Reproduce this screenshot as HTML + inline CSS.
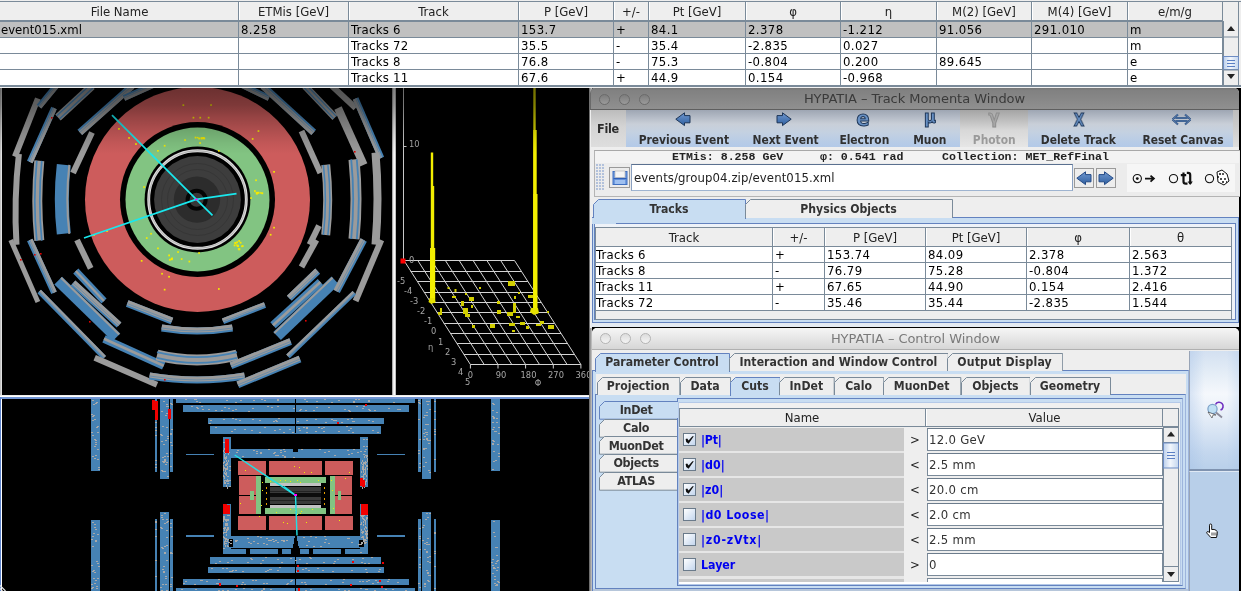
<!DOCTYPE html>
<html><head><meta charset="utf-8"><title>HYPATIA</title>
<style>
*{box-sizing:border-box;margin:0;padding:0}
html,body{width:1241px;height:591px;overflow:hidden;background:#000}
body{position:relative;font-family:"DejaVu Sans","Liberation Sans",sans-serif;font-size:12px;color:#000}
.abs{position:absolute}
.t{position:absolute;white-space:pre;will-change:transform;line-height:16px;height:16px;font-size:12px;letter-spacing:-0.3px}
.b{font-family:"DejaVu Sans Condensed","DejaVu Sans","Liberation Sans",sans-serif;font-weight:bold}
.c{text-align:center}
.grid{position:absolute;background:#7a8a99}
.hdr{position:absolute;background:#eee;border-right:1px solid #7a8a99;border-left:1px solid #fff;border-top:1px solid #fff}
.f13{font-family:"DejaVu Sans Condensed","DejaVu Sans","Liberation Sans",sans-serif;font-size:13px;letter-spacing:0}
.mono{font-family:"Liberation Mono",monospace;font-weight:bold}
</style></head><body>

<div class="abs" style="left:0px;top:0px;width:1241px;height:88px;background:#eee"></div>
<div class="abs" style="left:0px;top:21px;width:1222px;height:64px;background:#fff"></div>
<div class="abs" style="left:0px;top:21px;width:1222px;height:16px;background:#c0c0c0"></div>
<div class="abs" style="left:0px;top:1px;width:1241px;height:1px;background:#7a8a99"></div>
<div class="abs" style="left:0px;top:20px;width:1223px;height:2px;background:#7a8a99"></div>
<div class="t f13 c" style="left:1px;top:4px;width:237px;color:#222">File Name</div>
<div class="t f13 c" style="left:239px;top:4px;width:109px;color:#222">ETMis [GeV]</div>
<div class="t f13 c" style="left:349px;top:4px;width:169px;color:#222">Track</div>
<div class="t f13 c" style="left:519px;top:4px;width:94px;color:#222">P [GeV]</div>
<div class="t f13 c" style="left:614px;top:4px;width:34px;color:#222">+/-</div>
<div class="t f13 c" style="left:649px;top:4px;width:96px;color:#222">Pt [GeV]</div>
<div class="t f13 c" style="left:746px;top:4px;width:94px;color:#222">φ</div>
<div class="t f13 c" style="left:841px;top:4px;width:95px;color:#222">η</div>
<div class="t f13 c" style="left:937px;top:4px;width:94px;color:#222">M(2) [GeV]</div>
<div class="t f13 c" style="left:1032px;top:4px;width:95px;color:#222">M(4) [GeV]</div>
<div class="t f13 c" style="left:1128px;top:4px;width:94px;color:#222">e/m/g</div>
<div class="abs" style="left:238px;top:2px;width:1px;height:83px;background:#7a8a99"></div>
<div class="abs" style="left:239px;top:2px;width:1px;height:18px;background:#fff"></div>
<div class="abs" style="left:348px;top:2px;width:1px;height:83px;background:#7a8a99"></div>
<div class="abs" style="left:349px;top:2px;width:1px;height:18px;background:#fff"></div>
<div class="abs" style="left:518px;top:2px;width:1px;height:83px;background:#7a8a99"></div>
<div class="abs" style="left:519px;top:2px;width:1px;height:18px;background:#fff"></div>
<div class="abs" style="left:613px;top:2px;width:1px;height:83px;background:#7a8a99"></div>
<div class="abs" style="left:614px;top:2px;width:1px;height:18px;background:#fff"></div>
<div class="abs" style="left:648px;top:2px;width:1px;height:83px;background:#7a8a99"></div>
<div class="abs" style="left:649px;top:2px;width:1px;height:18px;background:#fff"></div>
<div class="abs" style="left:745px;top:2px;width:1px;height:83px;background:#7a8a99"></div>
<div class="abs" style="left:746px;top:2px;width:1px;height:18px;background:#fff"></div>
<div class="abs" style="left:840px;top:2px;width:1px;height:83px;background:#7a8a99"></div>
<div class="abs" style="left:841px;top:2px;width:1px;height:18px;background:#fff"></div>
<div class="abs" style="left:936px;top:2px;width:1px;height:83px;background:#7a8a99"></div>
<div class="abs" style="left:937px;top:2px;width:1px;height:18px;background:#fff"></div>
<div class="abs" style="left:1031px;top:2px;width:1px;height:83px;background:#7a8a99"></div>
<div class="abs" style="left:1032px;top:2px;width:1px;height:18px;background:#fff"></div>
<div class="abs" style="left:1127px;top:2px;width:1px;height:83px;background:#7a8a99"></div>
<div class="abs" style="left:1128px;top:2px;width:1px;height:18px;background:#fff"></div>
<div class="abs" style="left:1222px;top:2px;width:1px;height:83px;background:#7a8a99"></div>
<div class="abs" style="left:1223px;top:2px;width:1px;height:18px;background:#fff"></div>
<div class="abs" style="left:0px;top:37px;width:1223px;height:1px;background:#7a8a99"></div>
<div class="abs" style="left:0px;top:53px;width:1223px;height:1px;background:#7a8a99"></div>
<div class="abs" style="left:0px;top:69px;width:1223px;height:1px;background:#7a8a99"></div>
<div class="abs" style="left:0px;top:85px;width:1223px;height:1px;background:#7a8a99"></div>
<div class="t f13" style="left:1px;top:21.5px;">event015.xml</div>
<div class="t f13" style="left:240.5px;top:21.5px;letter-spacing:0.4px">8.258</div>
<div class="t f13" style="left:350.5px;top:21.5px;letter-spacing:0.25px">Tracks 6</div>
<div class="t f13" style="left:520.5px;top:21.5px;letter-spacing:0.4px">153.7</div>
<div class="t f13" style="left:615.5px;top:21.5px;">+</div>
<div class="t f13" style="left:650.5px;top:21.5px;letter-spacing:0.4px">84.1</div>
<div class="t f13" style="left:747.5px;top:21.5px;letter-spacing:0.4px">2.378</div>
<div class="t f13" style="left:842.5px;top:21.5px;letter-spacing:0.4px">-1.212</div>
<div class="t f13" style="left:938.5px;top:21.5px;letter-spacing:0.4px">91.056</div>
<div class="t f13" style="left:1033.5px;top:21.5px;letter-spacing:0.4px">291.010</div>
<div class="t f13" style="left:1129.5px;top:21.5px;">m</div>
<div class="t f13" style="left:350.5px;top:37.5px;letter-spacing:0.25px">Tracks 72</div>
<div class="t f13" style="left:520.5px;top:37.5px;letter-spacing:0.4px">35.5</div>
<div class="t f13" style="left:615.5px;top:37.5px;">-</div>
<div class="t f13" style="left:650.5px;top:37.5px;letter-spacing:0.4px">35.4</div>
<div class="t f13" style="left:747.5px;top:37.5px;letter-spacing:0.4px">-2.835</div>
<div class="t f13" style="left:842.5px;top:37.5px;letter-spacing:0.4px">0.027</div>
<div class="t f13" style="left:1129.5px;top:37.5px;">m</div>
<div class="t f13" style="left:350.5px;top:53.5px;letter-spacing:0.25px">Tracks 8</div>
<div class="t f13" style="left:520.5px;top:53.5px;letter-spacing:0.4px">76.8</div>
<div class="t f13" style="left:615.5px;top:53.5px;">-</div>
<div class="t f13" style="left:650.5px;top:53.5px;letter-spacing:0.4px">75.3</div>
<div class="t f13" style="left:747.5px;top:53.5px;letter-spacing:0.4px">-0.804</div>
<div class="t f13" style="left:842.5px;top:53.5px;letter-spacing:0.4px">0.200</div>
<div class="t f13" style="left:938.5px;top:53.5px;letter-spacing:0.4px">89.645</div>
<div class="t f13" style="left:1129.5px;top:53.5px;">e</div>
<div class="t f13" style="left:350.5px;top:69.5px;letter-spacing:0.25px">Tracks 11</div>
<div class="t f13" style="left:520.5px;top:69.5px;letter-spacing:0.4px">67.6</div>
<div class="t f13" style="left:615.5px;top:69.5px;">+</div>
<div class="t f13" style="left:650.5px;top:69.5px;letter-spacing:0.4px">44.9</div>
<div class="t f13" style="left:747.5px;top:69.5px;letter-spacing:0.4px">0.154</div>
<div class="t f13" style="left:842.5px;top:69.5px;letter-spacing:0.4px">-0.968</div>
<div class="t f13" style="left:1129.5px;top:69.5px;">e</div>
<div class="abs" style="left:1223px;top:21px;width:16px;height:65px;background:#eee;border-left:1px solid #7a8a99;border-right:1px solid #7a8a99"></div>
<div class="abs" style="left:1223px;top:2px;width:16px;height:19px;background:#eee;border-right:1px solid #7a8a99"></div>
<svg class="abs" style="left:1223px;top:21px" width="16" height="65"><path d="M4 10 L8 5 L12 10Z M4 53 L8 58 L12 53Z" fill="#222"/><rect x="0.5" y="15.5" width="15" height="1" fill="#7a8a99"/><rect x="0.5" y="35.5" width="15" height="13" fill="url(#tg)" stroke="#6d8cc4"/><path d="M4 39.5h8M4 42.5h8M4 45.5h8" stroke="#5a7fc4" stroke-width="1"/><rect x="0" y="48.5" width="16" height="1" fill="#7a8a99"/></svg>
<div class="abs" style="left:0px;top:85px;width:1241px;height:1.6px;background:#7a8a99"></div>
<div class="abs" style="left:0px;top:86.6px;width:1241px;height:1.5px;background:#f2f2f2"></div>
<svg class="abs" style="left:0;top:88px" width="393" height="308" viewBox="0 88 393 308" shape-rendering="auto">
<rect x="0" y="88" width="393" height="308" fill="#000"/>
<path d="M18.9 154.0Q13.7 199.2 16.5 244.7" stroke="#9b9b9b" stroke-width="6" fill="none"/>
<path d="M14.9 156.7L37.9 98.5" stroke="#9b9b9b" stroke-width="6" fill="none"/>
<path d="M39.0 106.6L56.0 86.0" stroke="#4682b4" stroke-width="6" fill="none"/>
<path d="M39.8 107.2L56.8 86.6" stroke="#9b9b9b" stroke-width="4" fill="none"/>
<path d="M39.0 106.6L56.0 86.0" stroke="#4682b4" stroke-width="0.8" fill="none" opacity=".7"/>
<path d="M39.3 160.8Q35.3 200.7 39.3 240.6" stroke="#9b9b9b" stroke-width="10" fill="none"/>
<path d="M41.8 160.8Q37.8 200.7 41.8 240.6" stroke="#4682b4" stroke-width="1.7" fill="none"/>
<path d="M36.8 160.8Q32.8 200.7 36.8 240.6" stroke="#4682b4" stroke-width="1.7" fill="none"/>
<path d="M29.8 162.0L54.0 108.0" stroke="#4682b4" stroke-width="6" fill="none"/>
<path d="M30.7 162.4L54.9 108.4" stroke="#9b9b9b" stroke-width="4" fill="none"/>
<path d="M29.8 162.0L54.0 108.0" stroke="#4682b4" stroke-width="0.8" fill="none" opacity=".7"/>
<path d="M58.0 117.5L92.0 86.0" stroke="#9b9b9b" stroke-width="8" fill="none"/>
<path d="M59.4 119.0L93.4 87.5" stroke="#4682b4" stroke-width="1.3" fill="none"/>
<path d="M56.6 116.0L90.6 84.5" stroke="#4682b4" stroke-width="1.3" fill="none"/>
<path d="M63.8 164.8Q59.8 199.3 63.8 233.8" stroke="#4682b4" stroke-width="14" fill="none"/>
<path d="M69.3 164.8Q65.3 199.3 69.3 233.8" stroke="#9b9b9b" stroke-width="2" fill="none"/>
<path d="M73.0 173.0L92.0 132.4" stroke="#9b9b9b" stroke-width="6" fill="none"/>
<path d="M79.8 132.4L132.0 86.0" stroke="#4682b4" stroke-width="7" fill="none"/>
<path d="M80.5 133.1L132.7 86.7" stroke="#9b9b9b" stroke-width="5" fill="none"/>
<path d="M79.8 132.4L132.0 86.0" stroke="#4682b4" stroke-width="0.8" fill="none" opacity=".7"/>
<path d="M124.0 98.0L153.0 85.0" stroke="#4682b4" stroke-width="6" fill="none"/>
<path d="M124.4 98.9L153.4 85.9" stroke="#9b9b9b" stroke-width="4" fill="none"/>
<path d="M124.0 98.0L153.0 85.0" stroke="#4682b4" stroke-width="0.8" fill="none" opacity=".7"/>
<path d="M242.0 85.0L269.0 98.0" stroke="#4682b4" stroke-width="6" fill="none"/>
<path d="M241.6 85.9L268.6 98.9" stroke="#9b9b9b" stroke-width="4" fill="none"/>
<path d="M242.0 85.0L269.0 98.0" stroke="#4682b4" stroke-width="0.8" fill="none" opacity=".7"/>
<path d="M263.0 86.0L313.7 132.4" stroke="#4682b4" stroke-width="7" fill="none"/>
<path d="M262.3 86.7L313.0 133.1" stroke="#9b9b9b" stroke-width="5" fill="none"/>
<path d="M263.0 86.0L313.7 132.4" stroke="#4682b4" stroke-width="0.8" fill="none" opacity=".7"/>
<path d="M301.5 131.0L320.4 173.0" stroke="#9b9b9b" stroke-width="6" fill="none"/>
<path d="M325.7 164.8Q329.7 199.9 325.7 235.0" stroke="#9b9b9b" stroke-width="9" fill="none"/>
<path d="M323.4 164.8Q327.4 199.9 323.4 235.0" stroke="#4682b4" stroke-width="1.5" fill="none"/>
<path d="M327.9 164.8Q331.9 199.9 327.9 235.0" stroke="#4682b4" stroke-width="1.5" fill="none"/>
<path d="M319.0 225.7L309.6 244.7" stroke="#9b9b9b" stroke-width="6" fill="none"/>
<path d="M305.0 86.0L335.0 117.5" stroke="#9b9b9b" stroke-width="7" fill="none"/>
<path d="M303.7 87.2L333.7 118.7" stroke="#4682b4" stroke-width="1.2" fill="none"/>
<path d="M306.3 84.8L336.3 116.3" stroke="#4682b4" stroke-width="1.2" fill="none"/>
<path d="M338.0 108.0L363.7 164.8" stroke="#9b9b9b" stroke-width="8" fill="none"/>
<path d="M354.0 159.4Q358.0 199.2 354.0 239.0" stroke="#9b9b9b" stroke-width="11" fill="none"/>
<path d="M351.2 159.4Q355.2 199.2 351.2 239.0" stroke="#4682b4" stroke-width="1.8" fill="none"/>
<path d="M356.8 159.4Q360.8 199.2 356.8 239.0" stroke="#4682b4" stroke-width="1.8" fill="none"/>
<path d="M332.0 86.0L355.6 108.0" stroke="#9b9b9b" stroke-width="6" fill="none"/>
<path d="M355.6 98.5L381.3 158.0" stroke="#4682b4" stroke-width="6" fill="none"/>
<path d="M354.7 98.9L380.4 158.4" stroke="#9b9b9b" stroke-width="4" fill="none"/>
<path d="M355.6 98.5L381.3 158.0" stroke="#4682b4" stroke-width="0.8" fill="none" opacity=".7"/>
<path d="M375.5 152.7Q379.5 198.7 375.5 244.7" stroke="#9b9b9b" stroke-width="8" fill="none"/>
<path d="M10.8 240.0L37.9 302.0" stroke="#9b9b9b" stroke-width="5" fill="none"/>
<path d="M29.8 240.0L54.0 292.8" stroke="#4682b4" stroke-width="6" fill="none"/>
<path d="M30.7 239.6L54.9 292.4" stroke="#9b9b9b" stroke-width="4" fill="none"/>
<path d="M29.8 240.0L54.0 292.8" stroke="#4682b4" stroke-width="0.8" fill="none" opacity=".7"/>
<path d="M77.0 240.0L90.7 268.4" stroke="#9b9b9b" stroke-width="6" fill="none"/>
<path d="M39.2 291.4L104.2 357.7" stroke="#4682b4" stroke-width="5" fill="none"/>
<path d="M39.9 290.7L104.9 357.0" stroke="#9b9b9b" stroke-width="3" fill="none"/>
<path d="M39.2 291.4L104.2 357.7" stroke="#4682b4" stroke-width="0.8" fill="none" opacity=".7"/>
<path d="M58.2 280.6L116.4 337.4" stroke="#4682b4" stroke-width="11" fill="none"/>
<path d="M61.0 277.7L119.2 334.5" stroke="#9b9b9b" stroke-width="2" fill="none"/>
<path d="M75.8 271.0L104.0 301.0" stroke="#4682b4" stroke-width="7" fill="none"/>
<path d="M75.8 271.0L104.0 301.0" stroke="#9b9b9b" stroke-width="2.3" fill="none"/>
<path d="M73.0 283.0L119.0 325.0" stroke="#4682b4" stroke-width="7" fill="none"/>
<path d="M73.7 282.3L119.7 324.3" stroke="#9b9b9b" stroke-width="5" fill="none"/>
<path d="M73.0 283.0L119.0 325.0" stroke="#4682b4" stroke-width="0.8" fill="none" opacity=".7"/>
<path d="M127.2 303.6L171.9 321.0" stroke="#4682b4" stroke-width="7" fill="none"/>
<path d="M127.6 302.7L172.3 320.1" stroke="#9b9b9b" stroke-width="5" fill="none"/>
<path d="M127.2 303.6L171.9 321.0" stroke="#4682b4" stroke-width="0.8" fill="none" opacity=".7"/>
<path d="M104.0 338.8L163.7 365.8" stroke="#4682b4" stroke-width="8" fill="none"/>
<path d="M104.0 338.8L163.7 365.8" stroke="#9b9b9b" stroke-width="2.7" fill="none"/>
<path d="M94.7 357.7L157.0 384.8" stroke="#9b9b9b" stroke-width="6" fill="none"/>
<path d="M161.7 328.0Q197.1 334.0 232.4 328.0" stroke="#4682b4" stroke-width="7" fill="none"/>
<path d="M161.7 327.0Q197.1 333.0 232.4 327.0" stroke="#9b9b9b" stroke-width="5" fill="none"/>
<path d="M161.7 328.0Q197.1 334.0 232.4 328.0" stroke="#4682b4" stroke-width="0.8" fill="none" opacity=".7"/>
<path d="M157.0 355.0Q197.0 365.0 237.0 355.0" stroke="#9b9b9b" stroke-width="11" fill="none"/>
<path d="M157.0 352.2Q197.0 362.2 237.0 352.2" stroke="#4682b4" stroke-width="1.8" fill="none"/>
<path d="M157.0 357.8Q197.0 367.8 237.0 357.8" stroke="#4682b4" stroke-width="1.8" fill="none"/>
<path d="M149.6 376.0Q197.1 384.0 244.5 376.0" stroke="#4682b4" stroke-width="7" fill="none"/>
<path d="M149.6 375.0Q197.1 383.0 244.5 375.0" stroke="#9b9b9b" stroke-width="5" fill="none"/>
<path d="M149.6 376.0Q197.1 384.0 244.5 376.0" stroke="#4682b4" stroke-width="0.8" fill="none" opacity=".7"/>
<path d="M301.5 267.0L316.4 240.0" stroke="#9b9b9b" stroke-width="6" fill="none"/>
<path d="M289.3 298.2L317.7 271.1" stroke="#4682b4" stroke-width="7" fill="none"/>
<path d="M288.6 297.5L317.0 270.4" stroke="#9b9b9b" stroke-width="5" fill="none"/>
<path d="M289.3 298.2L317.7 271.1" stroke="#4682b4" stroke-width="0.8" fill="none" opacity=".7"/>
<path d="M273.0 325.3L320.4 282.0" stroke="#4682b4" stroke-width="8" fill="none"/>
<path d="M273.0 325.3L320.4 282.0" stroke="#9b9b9b" stroke-width="2.7" fill="none"/>
<path d="M277.1 336.0L335.3 280.6" stroke="#4682b4" stroke-width="11" fill="none"/>
<path d="M274.3 333.1L332.5 277.7" stroke="#9b9b9b" stroke-width="2" fill="none"/>
<path d="M336.7 291.4L363.7 240.0" stroke="#4682b4" stroke-width="7" fill="none"/>
<path d="M335.8 290.9L362.8 239.5" stroke="#9b9b9b" stroke-width="5" fill="none"/>
<path d="M336.7 291.4L363.7 240.0" stroke="#4682b4" stroke-width="0.8" fill="none" opacity=".7"/>
<path d="M355.6 301.0L381.3 240.0" stroke="#9b9b9b" stroke-width="6" fill="none"/>
<path d="M288.0 356.4L354.3 292.8" stroke="#4682b4" stroke-width="5" fill="none"/>
<path d="M287.3 355.7L353.6 292.1" stroke="#9b9b9b" stroke-width="3" fill="none"/>
<path d="M288.0 356.4L354.3 292.8" stroke="#4682b4" stroke-width="0.8" fill="none" opacity=".7"/>
<path d="M223.0 321.2L265.0 305.0" stroke="#4682b4" stroke-width="6" fill="none"/>
<path d="M222.6 320.3L264.6 304.1" stroke="#9b9b9b" stroke-width="4" fill="none"/>
<path d="M223.0 321.2L265.0 305.0" stroke="#4682b4" stroke-width="0.8" fill="none" opacity=".7"/>
<path d="M231.0 365.8L290.7 341.5" stroke="#4682b4" stroke-width="7" fill="none"/>
<path d="M230.6 364.9L290.3 340.6" stroke="#9b9b9b" stroke-width="5" fill="none"/>
<path d="M231.0 365.8L290.7 341.5" stroke="#4682b4" stroke-width="0.8" fill="none" opacity=".7"/>
<path d="M237.9 384.8L300.0 359.0" stroke="#4682b4" stroke-width="7" fill="none"/>
<path d="M237.5 383.9L299.6 358.1" stroke="#9b9b9b" stroke-width="5" fill="none"/>
<path d="M237.9 384.8L300.0 359.0" stroke="#4682b4" stroke-width="0.8" fill="none" opacity=".7"/>
<defs><linearGradient id="rg" x1="0" y1="88" x2="0" y2="135" gradientUnits="userSpaceOnUse"><stop offset="0" stop-color="#6a2e2e"/><stop offset="1" stop-color="#cd5c5c"/></linearGradient></defs>
<circle cx="197.5" cy="199.5" r="112.5" fill="#cd5c5c"/>
<circle cx="197.5" cy="199.5" r="77.5" fill="#000"/>
<circle cx="197.5" cy="199.5" r="72" fill="#82c482"/>
<circle cx="197.5" cy="199.5" r="52.9" fill="#000"/>
<circle cx="197.5" cy="199.5" r="48.8" fill="none" stroke="#dcdcdc" stroke-width="2.9"/>
<circle cx="197.5" cy="199.5" r="48.8" fill="none" stroke="#8a8a8a" stroke-width="0.5"/>
<circle cx="197.5" cy="199.5" r="43.4" fill="#3d3d3d"/>
<circle cx="197.5" cy="199.5" r="36" fill="none" stroke="#363636" stroke-width="1"/>
<circle cx="197.5" cy="199.5" r="30" fill="none" stroke="#363636" stroke-width="1"/>
<circle cx="197" cy="199.6" r="23.2" fill="#2c2c2c"/>
<circle cx="196.6" cy="199.8" r="11" fill="#050505"/>
<circle cx="196.6" cy="199.8" r="7" fill="#383838"/>
<g fill="#f4ea00"><rect x="255.8" y="192.3" width="2.2" height="2.2"/><rect x="261.1" y="192.4" width="1.4" height="1.4"/><rect x="255.9" y="191.9" width="2.2" height="2.2"/><rect x="256.7" y="192.2" width="1.8" height="1.8"/><rect x="257.5" y="191.8" width="1.8" height="1.8"/><rect x="259.6" y="192.2" width="1.4" height="1.4"/><rect x="254.2" y="190.0" width="1.4" height="1.4"/><rect x="254.2" y="190.8" width="1.4" height="1.4"/><rect x="261.4" y="192.4" width="1.8" height="1.8"/><rect x="236.7" y="244.8" width="2.2" height="2.2"/><rect x="237.8" y="248.2" width="1.4" height="1.4"/><rect x="242.2" y="245.4" width="1.4" height="1.4"/><rect x="237.2" y="245.7" width="1.4" height="1.4"/><rect x="236.2" y="241.4" width="1.8" height="1.8"/><rect x="238.3" y="240.1" width="1.8" height="1.8"/><rect x="233.7" y="244.5" width="1.8" height="1.8"/><rect x="238.1" y="248.1" width="2.2" height="2.2"/><rect x="239.7" y="241.8" width="1.8" height="1.8"/><rect x="234.3" y="242.0" width="2.2" height="2.2"/><rect x="236.1" y="244.3" width="1.4" height="1.4"/><rect x="241.5" y="245.1" width="1.8" height="1.8"/><rect x="241.2" y="245.8" width="1.4" height="1.4"/><rect x="200.5" y="137.2" width="2.2" height="2.2"/><rect x="194.7" y="136.7" width="1.8" height="1.8"/><rect x="198.2" y="137.6" width="1.8" height="1.8"/><rect x="197.0" y="136.9" width="1.4" height="1.4"/><rect x="202.3" y="137.0" width="2.2" height="2.2"/><rect x="203.4" y="137.5" width="1.8" height="1.8"/><rect x="168.2" y="254.5" width="1.8" height="1.8"/><rect x="170.7" y="258.0" width="2.2" height="2.2"/><rect x="169.0" y="258.9" width="1.8" height="1.8"/><rect x="171.4" y="257.4" width="1.4" height="1.4"/><rect x="182.5" y="104.3" width="1.7" height="1.7"/><rect x="210.2" y="104.2" width="1.7" height="1.7"/><rect x="192.6" y="116.8" width="1.7" height="1.7"/><rect x="199.4" y="116.8" width="1.7" height="1.7"/><rect x="207.8" y="116.8" width="1.7" height="1.7"/><rect x="118.1" y="128.0" width="1.7" height="1.7"/><rect x="128.2" y="137.1" width="1.7" height="1.7"/><rect x="135.1" y="143.2" width="1.7" height="1.7"/><rect x="257.6" y="130.2" width="1.7" height="1.7"/><rect x="251.8" y="138.1" width="1.7" height="1.7"/><rect x="184.2" y="139.2" width="1.7" height="1.7"/><rect x="163.8" y="144.9" width="1.7" height="1.7"/><rect x="157.1" y="150.0" width="1.7" height="1.7"/><rect x="199.2" y="142.2" width="1.7" height="1.7"/><rect x="218.0" y="150.0" width="1.7" height="1.7"/><rect x="273.2" y="171.0" width="1.7" height="1.7"/><rect x="255.2" y="179.4" width="1.7" height="1.7"/><rect x="250.2" y="197.2" width="1.7" height="1.7"/><rect x="273.2" y="226.8" width="1.7" height="1.7"/><rect x="269.8" y="233.9" width="1.7" height="1.7"/><rect x="150.2" y="232.9" width="1.7" height="1.7"/><rect x="145.9" y="237.2" width="1.7" height="1.7"/><rect x="140.8" y="260.0" width="1.7" height="1.7"/><rect x="157.1" y="247.5" width="1.7" height="1.7"/><rect x="177.2" y="251.2" width="1.7" height="1.7"/><rect x="180.8" y="258.2" width="1.7" height="1.7"/><rect x="188.5" y="260.7" width="1.7" height="1.7"/><rect x="198.2" y="252.2" width="1.7" height="1.7"/><rect x="161.2" y="272.9" width="1.7" height="1.7"/><rect x="168.2" y="275.9" width="1.7" height="1.7"/><rect x="163.8" y="288.8" width="1.7" height="1.7"/><rect x="218.0" y="288.1" width="1.7" height="1.7"/><rect x="93.2" y="234.2" width="1.7" height="1.7"/><rect x="106.2" y="230.2" width="1.7" height="1.7"/><rect x="143.2" y="186.2" width="1.7" height="1.7"/></g>
<g fill="#e00000"><rect x="51" y="117" width="1.6" height="1.6"/><rect x="20" y="259" width="1.6" height="1.6"/><rect x="34" y="254" width="1.6" height="1.6"/><rect x="40" y="253" width="1.6" height="1.6"/><rect x="89" y="321" width="1.6" height="1.6"/><rect x="164" y="379" width="1.6" height="1.6"/><rect x="305" y="320" width="1.6" height="1.6"/><rect x="354" y="151" width="1.6" height="1.6"/></g>
<path d="M196.3 199.4L112 115.2" stroke="#19e8ee" stroke-width="1.7" fill="none"/>
<path d="M196.3 199.4L84 238" stroke="#19e8ee" stroke-width="1.7" fill="none"/>
<path d="M196.3 199.4L236.5 193.7" stroke="#19e8ee" stroke-width="1.7" fill="none"/>
<path d="M196.3 199.4L212.5 215.3" stroke="#19e8ee" stroke-width="1.7" fill="none"/>
<rect x="195" y="198.8" width="2.6" height="1.4" fill="#ff00ff"/>
</svg>
<div class="abs" style="left:0;top:88px;width:2px;height:307px;background:linear-gradient(90deg,#b4b4b4,#f0f0f0)"></div>
<div class="abs" style="left:392px;top:88px;width:4px;height:307px;background:linear-gradient(90deg,#8a8a8a,#e8e8e8 35%,#fff 60%,#a0a0a0)"></div><svg class="abs" style="left:396px;top:88px" width="193" height="308" viewBox="396 88 193 308">
<rect x="396" y="88" width="193" height="308" fill="#000"/>
<path d="M404.0 260.5L470.4 364.5M417.8 260.5L484.2 364.5M431.6 260.5L498.0 364.5M445.4 260.5L511.8 364.5M459.2 260.5L525.6 364.5M473.1 260.5L539.5 364.5M486.9 260.5L553.3 364.5M500.7 260.5L567.1 364.5M514.5 260.5L580.9 364.5M404.0 260.5L514.5 260.5M410.6 271.5L521.1 271.5M417.3 281.5L527.8 281.5M423.9 292.5L534.4 292.5M430.6 302.5L541.1 302.5M437.2 312.5L547.7 312.5M443.8 323.5L554.3 323.5M450.5 333.5L561.0 333.5M457.1 343.5L567.6 343.5M463.8 354.5L574.3 354.5M470.4 364.5L580.9 364.5M470.4 364.5v4M498.0 364.5v4M525.6 364.5v4M553.3 364.5v4M580.9 364.5v4" stroke="#d4d4d4" stroke-width="1" fill="none"/>
<path d="M403.5 88V261M403.5 146.5h3" stroke="#c8c8c8" stroke-width="1" fill="none"/>
<rect x="400.5" y="258.5" width="5" height="5" fill="#f00"/>
<g fill="#a6a6a6" font-family="'DejaVu Sans','Liberation Sans',sans-serif" font-size="8.3">
<text x="409" y="146.5">10</text><text x="409" y="263">0</text>
<text x="397" y="284">-5</text>
<text x="404" y="294">-4</text>
<text x="410" y="304">-3</text>
<text x="417" y="314">-2</text>
<text x="424" y="324">-1</text>
<text x="431" y="334">0</text>
<text x="428" y="350">η</text>
<text x="438" y="345">1</text>
<text x="445" y="355">2</text>
<text x="451" y="365">3</text>
<text x="458" y="375">4</text>
<text x="465" y="385">5</text>
<text x="470.5" y="378" text-anchor="middle">0</text>
<text x="501.0" y="378" text-anchor="middle">90</text>
<text x="528.5" y="378" text-anchor="middle">180</text>
<text x="556.0" y="378" text-anchor="middle">270</text>
<text x="583.5" y="378" text-anchor="middle">360</text>
<text x="538" y="386" text-anchor="middle">Φ</text>
</g>
<rect x="430.8" y="152.5" width="2.4" height="150" fill="#f2ee00"/><rect x="431" y="186" width="3.2" height="116" fill="#f2ee00"/><rect x="430" y="248" width="5.2" height="55" fill="#f2ee00"/>
<rect x="533.3" y="88" width="2.4" height="226" fill="#d8d400"/><rect x="533.3" y="130" width="3.4" height="184" fill="#f2ee00"/><rect x="533.3" y="194" width="4.2" height="120" fill="#f2ee00"/>
<path d="M429.5 298l5 0l1 4l-4 2l-3-2z" fill="#e6e200"/><path d="M531 308l7 0l1 5l-5 2l-4-3z" fill="#e6e200"/>
<g fill="#d2cf00"><rect x="447.5" y="287" width="2" height="2"/><rect x="454.5" y="289" width="2" height="3"/><rect x="452" y="296" width="4" height="2"/><rect x="465" y="293" width="2" height="2"/><rect x="469" y="297" width="5" height="4"/><rect x="461" y="301" width="3" height="5"/><rect x="463" y="308" width="5" height="6"/><rect x="465" y="314" width="5" height="3"/><rect x="471" y="305" width="2" height="3"/><rect x="440" y="308" width="2" height="4"/><rect x="438" y="312" width="4" height="3"/><rect x="479" y="287" width="2" height="2"/><rect x="472" y="325" width="3" height="3"/><rect x="490" y="324" width="5" height="4"/><rect x="497" y="301" width="3" height="3"/><rect x="497" y="310" width="4" height="4"/><rect x="508" y="281" width="7" height="5"/><rect x="518" y="292" width="2" height="2"/><rect x="514" y="296" width="2" height="3"/><rect x="507" y="312" width="6" height="4"/><rect x="513" y="303" width="3" height="10"/><rect x="516" y="316" width="4" height="2"/><rect x="509" y="323" width="6" height="3"/><rect x="512" y="330" width="3" height="2"/><rect x="520" y="322" width="5" height="3"/><rect x="526" y="326" width="3" height="3"/><rect x="536" y="324" width="5" height="2"/><rect x="540" y="321" width="4" height="3"/><rect x="548" y="325" width="6" height="4"/><rect x="547" y="311" width="2" height="2"/><rect x="528" y="295" width="5" height="3"/></g>
</svg>
<div class="abs" style="left:0;top:88px;width:589px;height:66px;background:linear-gradient(180deg,rgba(0,0,0,.48) 0,rgba(0,0,0,.39) 17px,rgba(0,0,0,.25) 31px,rgba(0,0,0,.14) 44px,rgba(0,0,0,.06) 55px,rgba(0,0,0,0) 66px)"></div>
<div class="abs" style="left:0;top:394.7px;width:589px;height:2.3px;background:linear-gradient(180deg,#d0d0d0,#fff 40%,#fff)"></div><div class="abs" style="left:0;top:397px;width:589px;height:1.7px;background:#6f93d2"></div>
<svg class="abs" style="left:0;top:399px" width="589" height="192" viewBox="0 399 589 192" shape-rendering="crispEdges">
<rect x="0" y="399" width="589" height="192" fill="#000"/>
<rect x="91.2" y="399.0" width="8.5" height="71.6" fill="#4682b4"/>
<rect x="491.3" y="399.0" width="8.5" height="71.6" fill="#4682b4"/>
<rect x="91.2" y="520.0" width="8.5" height="71.6" fill="#4682b4"/>
<rect x="491.3" y="520.0" width="8.5" height="71.6" fill="#4682b4"/>
<rect x="154.8" y="399.0" width="2.3" height="72.6" fill="#4682b4"/>
<rect x="433.9" y="399.0" width="2.3" height="72.6" fill="#4682b4"/>
<rect x="154.8" y="519.0" width="2.3" height="72.6" fill="#4682b4"/>
<rect x="433.9" y="519.0" width="2.3" height="72.6" fill="#4682b4"/>
<rect x="159.9" y="399.0" width="9.1" height="80.0" fill="#4682b4"/>
<rect x="422.0" y="399.0" width="9.1" height="80.0" fill="#4682b4"/>
<rect x="159.9" y="511.6" width="9.1" height="80.0" fill="#4682b4"/>
<rect x="422.0" y="511.6" width="9.1" height="80.0" fill="#4682b4"/>
<rect x="170.0" y="399.0" width="2.8" height="72.6" fill="#4682b4"/>
<rect x="418.2" y="399.0" width="2.8" height="72.6" fill="#4682b4"/>
<rect x="170.0" y="519.0" width="2.8" height="72.6" fill="#4682b4"/>
<rect x="418.2" y="519.0" width="2.8" height="72.6" fill="#4682b4"/>
<rect x="176.0" y="398.5" width="239.0" height="4.5" fill="#4682b4"/>
<rect x="176.0" y="587.6" width="239.0" height="4.5" fill="#4682b4"/>
<rect x="182.6" y="405.3" width="226.0" height="6.7" fill="#4682b4"/>
<rect x="182.6" y="578.6" width="226.0" height="6.7" fill="#4682b4"/>
<rect x="207.5" y="418.0" width="176.0" height="6.0" fill="#4682b4"/>
<rect x="207.5" y="566.6" width="176.0" height="6.0" fill="#4682b4"/>
<rect x="210.0" y="426.4" width="171.0" height="7.1" fill="#4682b4"/>
<rect x="210.0" y="557.1" width="171.0" height="7.1" fill="#4682b4"/>
<rect x="186.0" y="453.6" width="27.6" height="1.7" fill="#4682b4"/>
<rect x="377.4" y="453.6" width="27.6" height="1.7" fill="#4682b4"/>
<rect x="186.0" y="535.3" width="27.6" height="1.7" fill="#4682b4"/>
<rect x="377.4" y="535.3" width="27.6" height="1.7" fill="#4682b4"/>
<rect x="222.8" y="437.0" width="8.5" height="50.0" fill="#4682b4"/>
<rect x="359.7" y="437.0" width="8.5" height="50.0" fill="#4682b4"/>
<rect x="222.8" y="503.6" width="8.5" height="50.0" fill="#4682b4"/>
<rect x="359.7" y="503.6" width="8.5" height="50.0" fill="#4682b4"/>
<rect x="231.0" y="448.6" width="137.0" height="9.8" fill="#4682b4"/>
<rect x="227.0" y="535.8" width="141.0" height="12.0" fill="#4682b4"/>
<rect x="227.0" y="549.2" width="18.8" height="4.6" fill="#4682b4"/>
<rect x="250.2" y="549.2" width="27.6" height="4.6" fill="#4682b4"/>
<rect x="282.2" y="549.2" width="8.8" height="4.6" fill="#4682b4"/>
<rect x="299.8" y="549.2" width="8.8" height="4.6" fill="#4682b4"/>
<rect x="313.0" y="549.2" width="27.5" height="4.6" fill="#4682b4"/>
<rect x="345.0" y="549.2" width="22.5" height="4.6" fill="#4682b4"/>
<rect x="238.2" y="460.5" width="27.8" height="14.5" fill="#cd5c5c"/>
<rect x="325.0" y="460.5" width="27.8" height="14.5" fill="#cd5c5c"/>
<rect x="238.2" y="515.6" width="27.8" height="14.5" fill="#cd5c5c"/>
<rect x="325.0" y="515.6" width="27.8" height="14.5" fill="#cd5c5c"/>
<rect x="268.9" y="460.5" width="53.2" height="14.5" fill="#cd5c5c"/>
<rect x="268.9" y="515.6" width="53.2" height="14.5" fill="#cd5c5c"/>
<rect x="239.0" y="476.4" width="17.4" height="18.3" fill="#cd5c5c"/>
<rect x="334.6" y="476.4" width="17.4" height="18.3" fill="#cd5c5c"/>
<rect x="239.0" y="495.9" width="17.4" height="18.3" fill="#cd5c5c"/>
<rect x="334.6" y="495.9" width="17.4" height="18.3" fill="#cd5c5c"/>
<rect x="265.0" y="476.8" width="61.0" height="6.2" fill="#82c482"/>
<rect x="265.0" y="507.6" width="61.0" height="6.2" fill="#82c482"/>
<rect x="256.4" y="476.4" width="5.0" height="38.0" fill="#82c482"/>
<rect x="329.6" y="476.4" width="5.0" height="38.0" fill="#82c482"/>
<rect x="249.8" y="491.0" width="3.7" height="8.6" fill="#82c482"/>
<rect x="337.5" y="491.0" width="3.7" height="8.6" fill="#82c482"/>
<rect x="270.0" y="483.0" width="50.8" height="2.5" fill="#c2c2c2"/>
<rect x="270.0" y="505.1" width="50.8" height="2.5" fill="#c2c2c2"/>
<rect x="270.0" y="486.6" width="50.8" height="17.4" fill="#3a3a3a"/>
<rect x="270.0" y="490.5" width="50.8" height="1.0" fill="#222"/>
<rect x="270.0" y="499.5" width="50.8" height="1.0" fill="#222"/>
<rect x="270.0" y="493.4" width="50.8" height="3.8" fill="#0c0c0c"/>
<rect x="293" y="448.5" width="5" height="3" fill="#000"/><path d="M295 535.8L296.5 535.8L300 554L291.5 554Z" fill="#000"/><rect x="228.6" y="539" width="4.6" height="7.6" fill="#000"/><rect x="358.5" y="540" width="5.5" height="6.6" fill="#000"/><rect x="245.8" y="547.8" width="4.4" height="6" fill="#000"/><rect x="340.5" y="547.8" width="4.5" height="6" fill="#000"/>
<rect x="294.8" y="399" width="1.2" height="34" fill="#000"/><rect x="294.8" y="556" width="1.2" height="35" fill="#000"/>
<g fill="#a9a9a9"><rect x="94" y="439" width="2" height="1"/><rect x="97" y="432" width="2" height="1"/><rect x="95" y="440" width="2" height="1"/><rect x="92" y="435" width="2" height="1"/><rect x="95" y="455" width="2" height="1"/><rect x="92" y="420" width="2" height="1"/><rect x="92" y="456" width="2" height="1"/><rect x="96" y="402" width="2" height="1"/><rect x="98" y="467" width="2" height="1"/><rect x="95" y="442" width="2" height="1"/><rect x="92" y="400" width="2" height="1"/><rect x="95" y="403" width="2" height="1"/><rect x="92" y="416" width="2" height="1"/><rect x="91" y="432" width="2" height="1"/><rect x="94" y="458" width="2" height="1"/><rect x="95" y="444" width="2" height="1"/><rect x="94" y="446" width="2" height="1"/><rect x="94" y="419" width="2" height="1"/><rect x="98" y="469" width="2" height="1"/><rect x="97" y="449" width="2" height="1"/><rect x="93" y="415" width="2" height="1"/><rect x="93" y="404" width="2" height="1"/><rect x="96" y="427" width="2" height="1"/><rect x="97" y="426" width="2" height="1"/><rect x="97" y="459" width="2" height="1"/><rect x="91" y="414" width="2" height="1"/><rect x="97" y="432" width="2" height="1"/><rect x="498" y="427" width="2" height="1"/><rect x="492" y="443" width="2" height="1"/><rect x="496" y="418" width="2" height="1"/><rect x="492" y="422" width="2" height="1"/><rect x="498" y="453" width="2" height="1"/><rect x="492" y="416" width="2" height="1"/><rect x="492" y="403" width="2" height="1"/><rect x="496" y="412" width="2" height="1"/><rect x="495" y="431" width="2" height="1"/><rect x="493" y="451" width="2" height="1"/><rect x="492" y="444" width="2" height="1"/><rect x="492" y="429" width="2" height="1"/><rect x="493" y="418" width="2" height="1"/><rect x="498" y="456" width="2" height="1"/><rect x="493" y="461" width="2" height="1"/><rect x="493" y="427" width="2" height="1"/><rect x="497" y="444" width="2" height="1"/><rect x="492" y="469" width="2" height="1"/><rect x="493" y="417" width="2" height="1"/><rect x="496" y="422" width="2" height="1"/><rect x="493" y="404" width="2" height="1"/><rect x="492" y="440" width="2" height="1"/><rect x="493" y="441" width="2" height="1"/><rect x="494" y="431" width="2" height="1"/><rect x="498" y="433" width="2" height="1"/><rect x="495" y="460" width="2" height="1"/><rect x="492" y="410" width="2" height="1"/><rect x="97" y="578" width="2" height="1"/><rect x="93" y="533" width="2" height="1"/><rect x="96" y="586" width="2" height="1"/><rect x="92" y="587" width="2" height="1"/><rect x="97" y="563" width="2" height="1"/><rect x="94" y="527" width="2" height="1"/><rect x="91" y="588" width="2" height="1"/><rect x="93" y="570" width="2" height="1"/><rect x="93" y="578" width="2" height="1"/><rect x="95" y="541" width="2" height="1"/><rect x="92" y="571" width="2" height="1"/><rect x="92" y="536" width="2" height="1"/><rect x="95" y="580" width="2" height="1"/><rect x="95" y="540" width="2" height="1"/><rect x="97" y="534" width="2" height="1"/><rect x="91" y="539" width="2" height="1"/><rect x="94" y="524" width="2" height="1"/><rect x="92" y="546" width="2" height="1"/><rect x="95" y="529" width="2" height="1"/><rect x="94" y="583" width="2" height="1"/><rect x="98" y="566" width="2" height="1"/><rect x="96" y="561" width="2" height="1"/><rect x="92" y="522" width="2" height="1"/><rect x="91" y="584" width="2" height="1"/><rect x="96" y="588" width="2" height="1"/><rect x="91" y="565" width="2" height="1"/><rect x="94" y="572" width="2" height="1"/><rect x="493" y="591" width="2" height="1"/><rect x="492" y="559" width="2" height="1"/><rect x="496" y="584" width="2" height="1"/><rect x="496" y="570" width="2" height="1"/><rect x="496" y="585" width="2" height="1"/><rect x="494" y="568" width="2" height="1"/><rect x="497" y="581" width="2" height="1"/><rect x="494" y="576" width="2" height="1"/><rect x="497" y="560" width="2" height="1"/><rect x="495" y="547" width="2" height="1"/><rect x="495" y="563" width="2" height="1"/><rect x="492" y="565" width="2" height="1"/><rect x="498" y="582" width="2" height="1"/><rect x="496" y="547" width="2" height="1"/><rect x="496" y="561" width="2" height="1"/><rect x="494" y="579" width="2" height="1"/><rect x="492" y="573" width="2" height="1"/><rect x="491" y="562" width="2" height="1"/><rect x="494" y="536" width="2" height="1"/><rect x="496" y="555" width="2" height="1"/><rect x="495" y="585" width="2" height="1"/><rect x="493" y="521" width="2" height="1"/><rect x="493" y="568" width="2" height="1"/><rect x="493" y="532" width="2" height="1"/><rect x="497" y="567" width="2" height="1"/><rect x="494" y="583" width="2" height="1"/><rect x="493" y="567" width="2" height="1"/><rect x="155" y="430" width="2" height="1"/><rect x="155" y="464" width="2" height="1"/><rect x="155" y="427" width="2" height="1"/><rect x="155" y="422" width="2" height="1"/><rect x="155" y="435" width="2" height="1"/><rect x="155" y="460" width="2" height="1"/><rect x="155" y="467" width="2" height="1"/><rect x="434" y="411" width="2" height="1"/><rect x="434" y="419" width="2" height="1"/><rect x="434" y="429" width="2" height="1"/><rect x="434" y="434" width="2" height="1"/><rect x="434" y="459" width="2" height="1"/><rect x="434" y="431" width="2" height="1"/><rect x="434" y="401" width="2" height="1"/><rect x="155" y="522" width="2" height="1"/><rect x="155" y="560" width="2" height="1"/><rect x="155" y="576" width="2" height="1"/><rect x="155" y="529" width="2" height="1"/><rect x="155" y="521" width="2" height="1"/><rect x="155" y="536" width="2" height="1"/><rect x="155" y="522" width="2" height="1"/><rect x="434" y="551" width="2" height="1"/><rect x="434" y="566" width="2" height="1"/><rect x="434" y="588" width="2" height="1"/><rect x="434" y="533" width="2" height="1"/><rect x="434" y="532" width="2" height="1"/><rect x="434" y="553" width="2" height="1"/><rect x="434" y="532" width="2" height="1"/><rect x="162" y="426" width="2" height="1"/><rect x="165" y="440" width="2" height="1"/><rect x="164" y="459" width="2" height="1"/><rect x="163" y="462" width="2" height="1"/><rect x="166" y="406" width="2" height="1"/><rect x="167" y="456" width="2" height="1"/><rect x="161" y="435" width="2" height="1"/><rect x="164" y="471" width="2" height="1"/><rect x="163" y="444" width="2" height="1"/><rect x="166" y="462" width="2" height="1"/><rect x="167" y="436" width="2" height="1"/><rect x="165" y="415" width="2" height="1"/><rect x="165" y="464" width="2" height="1"/><rect x="164" y="456" width="2" height="1"/><rect x="161" y="470" width="2" height="1"/><rect x="167" y="476" width="2" height="1"/><rect x="164" y="461" width="2" height="1"/><rect x="162" y="471" width="2" height="1"/><rect x="166" y="427" width="2" height="1"/><rect x="160" y="434" width="2" height="1"/><rect x="164" y="460" width="2" height="1"/><rect x="163" y="401" width="2" height="1"/><rect x="166" y="404" width="2" height="1"/><rect x="166" y="413" width="2" height="1"/><rect x="162" y="461" width="2" height="1"/><rect x="161" y="411" width="2" height="1"/><rect x="164" y="456" width="2" height="1"/><rect x="166" y="453" width="2" height="1"/><rect x="167" y="438" width="2" height="1"/><rect x="167" y="406" width="2" height="1"/><rect x="161" y="441" width="2" height="1"/><rect x="162" y="457" width="2" height="1"/><rect x="427" y="440" width="2" height="1"/><rect x="428" y="443" width="2" height="1"/><rect x="424" y="429" width="2" height="1"/><rect x="428" y="470" width="2" height="1"/><rect x="423" y="466" width="2" height="1"/><rect x="429" y="440" width="2" height="1"/><rect x="426" y="415" width="2" height="1"/><rect x="426" y="439" width="2" height="1"/><rect x="426" y="401" width="2" height="1"/><rect x="429" y="440" width="2" height="1"/><rect x="425" y="462" width="2" height="1"/><rect x="426" y="438" width="2" height="1"/><rect x="427" y="404" width="2" height="1"/><rect x="426" y="432" width="2" height="1"/><rect x="429" y="472" width="2" height="1"/><rect x="424" y="436" width="2" height="1"/><rect x="423" y="433" width="2" height="1"/><rect x="428" y="470" width="2" height="1"/><rect x="425" y="424" width="2" height="1"/><rect x="423" y="448" width="2" height="1"/><rect x="429" y="409" width="2" height="1"/><rect x="428" y="401" width="2" height="1"/><rect x="423" y="417" width="2" height="1"/><rect x="427" y="424" width="2" height="1"/><rect x="425" y="448" width="2" height="1"/><rect x="423" y="457" width="2" height="1"/><rect x="423" y="439" width="2" height="1"/><rect x="424" y="415" width="2" height="1"/><rect x="426" y="434" width="2" height="1"/><rect x="425" y="432" width="2" height="1"/><rect x="426" y="412" width="2" height="1"/><rect x="423" y="449" width="2" height="1"/><rect x="164" y="553" width="2" height="1"/><rect x="166" y="560" width="2" height="1"/><rect x="166" y="530" width="2" height="1"/><rect x="165" y="576" width="2" height="1"/><rect x="166" y="537" width="2" height="1"/><rect x="162" y="584" width="2" height="1"/><rect x="161" y="590" width="2" height="1"/><rect x="166" y="522" width="2" height="1"/><rect x="162" y="569" width="2" height="1"/><rect x="162" y="519" width="2" height="1"/><rect x="166" y="545" width="2" height="1"/><rect x="166" y="522" width="2" height="1"/><rect x="163" y="566" width="2" height="1"/><rect x="160" y="527" width="2" height="1"/><rect x="165" y="584" width="2" height="1"/><rect x="167" y="521" width="2" height="1"/><rect x="163" y="571" width="2" height="1"/><rect x="163" y="566" width="2" height="1"/><rect x="161" y="517" width="2" height="1"/><rect x="161" y="515" width="2" height="1"/><rect x="164" y="552" width="2" height="1"/><rect x="164" y="523" width="2" height="1"/><rect x="161" y="528" width="2" height="1"/><rect x="166" y="590" width="2" height="1"/><rect x="166" y="519" width="2" height="1"/><rect x="160" y="587" width="2" height="1"/><rect x="163" y="572" width="2" height="1"/><rect x="162" y="548" width="2" height="1"/><rect x="164" y="546" width="2" height="1"/><rect x="164" y="513" width="2" height="1"/><rect x="165" y="578" width="2" height="1"/><rect x="161" y="547" width="2" height="1"/><rect x="427" y="544" width="2" height="1"/><rect x="423" y="525" width="2" height="1"/><rect x="426" y="513" width="2" height="1"/><rect x="428" y="575" width="2" height="1"/><rect x="427" y="580" width="2" height="1"/><rect x="426" y="544" width="2" height="1"/><rect x="426" y="551" width="2" height="1"/><rect x="429" y="575" width="2" height="1"/><rect x="424" y="584" width="2" height="1"/><rect x="427" y="573" width="2" height="1"/><rect x="428" y="544" width="2" height="1"/><rect x="428" y="581" width="2" height="1"/><rect x="427" y="572" width="2" height="1"/><rect x="427" y="544" width="2" height="1"/><rect x="427" y="517" width="2" height="1"/><rect x="424" y="549" width="2" height="1"/><rect x="422" y="540" width="2" height="1"/><rect x="427" y="561" width="2" height="1"/><rect x="424" y="586" width="2" height="1"/><rect x="427" y="538" width="2" height="1"/><rect x="427" y="557" width="2" height="1"/><rect x="426" y="542" width="2" height="1"/><rect x="429" y="562" width="2" height="1"/><rect x="427" y="572" width="2" height="1"/><rect x="429" y="513" width="2" height="1"/><rect x="426" y="570" width="2" height="1"/><rect x="424" y="543" width="2" height="1"/><rect x="422" y="527" width="2" height="1"/><rect x="425" y="519" width="2" height="1"/><rect x="424" y="583" width="2" height="1"/><rect x="426" y="552" width="2" height="1"/><rect x="429" y="556" width="2" height="1"/><rect x="171" y="445" width="2" height="1"/><rect x="171" y="404" width="2" height="1"/><rect x="170" y="453" width="2" height="1"/><rect x="170" y="466" width="2" height="1"/><rect x="170" y="433" width="2" height="1"/><rect x="170" y="434" width="2" height="1"/><rect x="170" y="403" width="2" height="1"/><rect x="171" y="429" width="2" height="1"/><rect x="170" y="442" width="2" height="1"/><rect x="418" y="419" width="2" height="1"/><rect x="419" y="439" width="2" height="1"/><rect x="418" y="450" width="2" height="1"/><rect x="418" y="400" width="2" height="1"/><rect x="418" y="402" width="2" height="1"/><rect x="418" y="453" width="2" height="1"/><rect x="419" y="463" width="2" height="1"/><rect x="419" y="403" width="2" height="1"/><rect x="419" y="467" width="2" height="1"/><rect x="170" y="584" width="2" height="1"/><rect x="170" y="553" width="2" height="1"/><rect x="171" y="536" width="2" height="1"/><rect x="170" y="586" width="2" height="1"/><rect x="171" y="553" width="2" height="1"/><rect x="171" y="577" width="2" height="1"/><rect x="170" y="527" width="2" height="1"/><rect x="170" y="552" width="2" height="1"/><rect x="170" y="523" width="2" height="1"/><rect x="419" y="528" width="2" height="1"/><rect x="419" y="567" width="2" height="1"/><rect x="419" y="538" width="2" height="1"/><rect x="419" y="549" width="2" height="1"/><rect x="419" y="557" width="2" height="1"/><rect x="419" y="587" width="2" height="1"/><rect x="419" y="536" width="2" height="1"/><rect x="418" y="583" width="2" height="1"/><rect x="419" y="564" width="2" height="1"/><rect x="261" y="399" width="2" height="1"/><rect x="338" y="400" width="2" height="1"/><rect x="316" y="401" width="2" height="1"/><rect x="355" y="399" width="2" height="1"/><rect x="235" y="402" width="2" height="1"/><rect x="393" y="402" width="2" height="1"/><rect x="185" y="399" width="2" height="1"/><rect x="240" y="400" width="2" height="1"/><rect x="324" y="399" width="2" height="1"/><rect x="304" y="399" width="2" height="1"/><rect x="196" y="401" width="2" height="1"/><rect x="306" y="401" width="2" height="1"/><rect x="264" y="400" width="2" height="1"/><rect x="226" y="400" width="2" height="1"/><rect x="353" y="401" width="2" height="1"/><rect x="194" y="399" width="2" height="1"/><rect x="368" y="401" width="2" height="1"/><rect x="358" y="399" width="2" height="1"/><rect x="277" y="399" width="2" height="1"/><rect x="368" y="400" width="2" height="1"/><rect x="331" y="402" width="2" height="1"/><rect x="253" y="400" width="2" height="1"/><rect x="353" y="402" width="2" height="1"/><rect x="277" y="400" width="2" height="1"/><rect x="199" y="402" width="2" height="1"/><rect x="195" y="399" width="2" height="1"/><rect x="310" y="589" width="2" height="1"/><rect x="338" y="589" width="2" height="1"/><rect x="360" y="588" width="2" height="1"/><rect x="227" y="590" width="2" height="1"/><rect x="195" y="589" width="2" height="1"/><rect x="348" y="590" width="2" height="1"/><rect x="243" y="588" width="2" height="1"/><rect x="261" y="590" width="2" height="1"/><rect x="263" y="588" width="2" height="1"/><rect x="344" y="590" width="2" height="1"/><rect x="394" y="591" width="2" height="1"/><rect x="392" y="589" width="2" height="1"/><rect x="366" y="589" width="2" height="1"/><rect x="251" y="589" width="2" height="1"/><rect x="398" y="591" width="2" height="1"/><rect x="235" y="589" width="2" height="1"/><rect x="263" y="589" width="2" height="1"/><rect x="270" y="589" width="2" height="1"/><rect x="222" y="590" width="2" height="1"/><rect x="365" y="589" width="2" height="1"/><rect x="374" y="590" width="2" height="1"/><rect x="218" y="590" width="2" height="1"/><rect x="385" y="589" width="2" height="1"/><rect x="181" y="589" width="2" height="1"/><rect x="305" y="590" width="2" height="1"/><rect x="405" y="590" width="2" height="1"/><rect x="363" y="406" width="2" height="1"/><rect x="305" y="410" width="2" height="1"/><rect x="201" y="406" width="2" height="1"/><rect x="348" y="410" width="2" height="1"/><rect x="202" y="409" width="2" height="1"/><rect x="215" y="410" width="2" height="1"/><rect x="328" y="407" width="2" height="1"/><rect x="232" y="410" width="2" height="1"/><rect x="299" y="410" width="2" height="1"/><rect x="271" y="407" width="2" height="1"/><rect x="399" y="409" width="2" height="1"/><rect x="293" y="408" width="2" height="1"/><rect x="344" y="409" width="2" height="1"/><rect x="388" y="408" width="2" height="1"/><rect x="368" y="409" width="2" height="1"/><rect x="374" y="410" width="2" height="1"/><rect x="369" y="410" width="2" height="1"/><rect x="397" y="409" width="2" height="1"/><rect x="300" y="409" width="2" height="1"/><rect x="362" y="408" width="2" height="1"/><rect x="277" y="406" width="2" height="1"/><rect x="349" y="411" width="2" height="1"/><rect x="267" y="406" width="2" height="1"/><rect x="228" y="408" width="2" height="1"/><rect x="248" y="411" width="2" height="1"/><rect x="196" y="407" width="2" height="1"/><rect x="208" y="409" width="2" height="1"/><rect x="356" y="406" width="2" height="1"/><rect x="197" y="408" width="2" height="1"/><rect x="313" y="410" width="2" height="1"/><rect x="191" y="406" width="2" height="1"/><rect x="224" y="407" width="2" height="1"/><rect x="235" y="409" width="2" height="1"/><rect x="316" y="407" width="2" height="1"/><rect x="224" y="407" width="2" height="1"/><rect x="221" y="410" width="2" height="1"/><rect x="252" y="408" width="2" height="1"/><rect x="366" y="581" width="2" height="1"/><rect x="241" y="584" width="2" height="1"/><rect x="387" y="581" width="2" height="1"/><rect x="305" y="584" width="2" height="1"/><rect x="291" y="580" width="2" height="1"/><rect x="194" y="584" width="2" height="1"/><rect x="362" y="581" width="2" height="1"/><rect x="301" y="582" width="2" height="1"/><rect x="244" y="584" width="2" height="1"/><rect x="330" y="580" width="2" height="1"/><rect x="185" y="581" width="2" height="1"/><rect x="266" y="583" width="2" height="1"/><rect x="342" y="582" width="2" height="1"/><rect x="218" y="579" width="2" height="1"/><rect x="255" y="580" width="2" height="1"/><rect x="377" y="582" width="2" height="1"/><rect x="325" y="584" width="2" height="1"/><rect x="242" y="582" width="2" height="1"/><rect x="216" y="583" width="2" height="1"/><rect x="183" y="583" width="2" height="1"/><rect x="372" y="583" width="2" height="1"/><rect x="201" y="580" width="2" height="1"/><rect x="343" y="579" width="2" height="1"/><rect x="290" y="581" width="2" height="1"/><rect x="397" y="582" width="2" height="1"/><rect x="375" y="580" width="2" height="1"/><rect x="359" y="581" width="2" height="1"/><rect x="388" y="579" width="2" height="1"/><rect x="368" y="580" width="2" height="1"/><rect x="304" y="582" width="2" height="1"/><rect x="218" y="583" width="2" height="1"/><rect x="252" y="580" width="2" height="1"/><rect x="200" y="580" width="2" height="1"/><rect x="287" y="583" width="2" height="1"/><rect x="263" y="583" width="2" height="1"/><rect x="206" y="581" width="2" height="1"/><rect x="286" y="584" width="2" height="1"/><rect x="352" y="421" width="2" height="1"/><rect x="210" y="420" width="2" height="1"/><rect x="331" y="419" width="2" height="1"/><rect x="306" y="420" width="2" height="1"/><rect x="209" y="423" width="2" height="1"/><rect x="347" y="419" width="2" height="1"/><rect x="315" y="419" width="2" height="1"/><rect x="273" y="421" width="2" height="1"/><rect x="259" y="420" width="2" height="1"/><rect x="276" y="421" width="2" height="1"/><rect x="252" y="419" width="2" height="1"/><rect x="335" y="420" width="2" height="1"/><rect x="372" y="421" width="2" height="1"/><rect x="333" y="420" width="2" height="1"/><rect x="351" y="418" width="2" height="1"/><rect x="232" y="418" width="2" height="1"/><rect x="325" y="422" width="2" height="1"/><rect x="239" y="420" width="2" height="1"/><rect x="353" y="421" width="2" height="1"/><rect x="223" y="419" width="2" height="1"/><rect x="235" y="419" width="2" height="1"/><rect x="278" y="418" width="2" height="1"/><rect x="368" y="420" width="2" height="1"/><rect x="297" y="421" width="2" height="1"/><rect x="341" y="422" width="2" height="1"/><rect x="275" y="420" width="2" height="1"/><rect x="279" y="567" width="2" height="1"/><rect x="277" y="570" width="2" height="1"/><rect x="378" y="571" width="2" height="1"/><rect x="322" y="570" width="2" height="1"/><rect x="211" y="568" width="2" height="1"/><rect x="267" y="570" width="2" height="1"/><rect x="226" y="568" width="2" height="1"/><rect x="296" y="571" width="2" height="1"/><rect x="351" y="570" width="2" height="1"/><rect x="235" y="570" width="2" height="1"/><rect x="365" y="569" width="2" height="1"/><rect x="269" y="569" width="2" height="1"/><rect x="232" y="570" width="2" height="1"/><rect x="379" y="569" width="2" height="1"/><rect x="332" y="571" width="2" height="1"/><rect x="242" y="571" width="2" height="1"/><rect x="317" y="568" width="2" height="1"/><rect x="222" y="568" width="2" height="1"/><rect x="308" y="570" width="2" height="1"/><rect x="265" y="571" width="2" height="1"/><rect x="270" y="569" width="2" height="1"/><rect x="229" y="571" width="2" height="1"/><rect x="231" y="571" width="2" height="1"/><rect x="302" y="569" width="2" height="1"/><rect x="305" y="568" width="2" height="1"/><rect x="366" y="572" width="2" height="1"/><rect x="348" y="430" width="2" height="1"/><rect x="231" y="431" width="2" height="1"/><rect x="259" y="432" width="2" height="1"/><rect x="251" y="430" width="2" height="1"/><rect x="350" y="428" width="2" height="1"/><rect x="303" y="427" width="2" height="1"/><rect x="215" y="427" width="2" height="1"/><rect x="377" y="432" width="2" height="1"/><rect x="321" y="428" width="2" height="1"/><rect x="323" y="431" width="2" height="1"/><rect x="274" y="430" width="2" height="1"/><rect x="346" y="426" width="2" height="1"/><rect x="244" y="429" width="2" height="1"/><rect x="234" y="429" width="2" height="1"/><rect x="306" y="427" width="2" height="1"/><rect x="298" y="428" width="2" height="1"/><rect x="306" y="428" width="2" height="1"/><rect x="318" y="427" width="2" height="1"/><rect x="323" y="427" width="2" height="1"/><rect x="372" y="430" width="2" height="1"/><rect x="289" y="429" width="2" height="1"/><rect x="315" y="431" width="2" height="1"/><rect x="338" y="431" width="2" height="1"/><rect x="292" y="432" width="2" height="1"/><rect x="352" y="432" width="2" height="1"/><rect x="279" y="429" width="2" height="1"/><rect x="306" y="432" width="2" height="1"/><rect x="299" y="430" width="2" height="1"/><rect x="283" y="432" width="2" height="1"/><rect x="264" y="427" width="2" height="1"/><rect x="333" y="563" width="2" height="1"/><rect x="334" y="561" width="2" height="1"/><rect x="337" y="559" width="2" height="1"/><rect x="310" y="558" width="2" height="1"/><rect x="231" y="560" width="2" height="1"/><rect x="295" y="560" width="2" height="1"/><rect x="219" y="561" width="2" height="1"/><rect x="299" y="559" width="2" height="1"/><rect x="262" y="560" width="2" height="1"/><rect x="250" y="558" width="2" height="1"/><rect x="364" y="563" width="2" height="1"/><rect x="323" y="562" width="2" height="1"/><rect x="281" y="562" width="2" height="1"/><rect x="247" y="562" width="2" height="1"/><rect x="306" y="563" width="2" height="1"/><rect x="227" y="562" width="2" height="1"/><rect x="231" y="560" width="2" height="1"/><rect x="371" y="557" width="2" height="1"/><rect x="251" y="559" width="2" height="1"/><rect x="265" y="557" width="2" height="1"/><rect x="361" y="562" width="2" height="1"/><rect x="277" y="559" width="2" height="1"/><rect x="309" y="557" width="2" height="1"/><rect x="215" y="563" width="2" height="1"/><rect x="262" y="560" width="2" height="1"/><rect x="368" y="563" width="2" height="1"/><rect x="290" y="558" width="2" height="1"/><rect x="260" y="563" width="2" height="1"/><rect x="362" y="558" width="2" height="1"/><rect x="352" y="559" width="2" height="1"/><rect x="226" y="445" width="2" height="1"/><rect x="229" y="486" width="2" height="1"/><rect x="224" y="468" width="2" height="1"/><rect x="224" y="480" width="2" height="1"/><rect x="223" y="442" width="2" height="1"/><rect x="228" y="452" width="2" height="1"/><rect x="229" y="480" width="2" height="1"/><rect x="227" y="444" width="2" height="1"/><rect x="227" y="483" width="2" height="1"/><rect x="226" y="441" width="2" height="1"/><rect x="224" y="452" width="2" height="1"/><rect x="227" y="447" width="2" height="1"/><rect x="224" y="449" width="2" height="1"/><rect x="227" y="476" width="2" height="1"/><rect x="225" y="469" width="2" height="1"/><rect x="229" y="466" width="2" height="1"/><rect x="224" y="452" width="2" height="1"/><rect x="229" y="470" width="2" height="1"/><rect x="225" y="468" width="2" height="1"/><rect x="360" y="485" width="2" height="1"/><rect x="363" y="463" width="2" height="1"/><rect x="363" y="439" width="2" height="1"/><rect x="364" y="451" width="2" height="1"/><rect x="361" y="476" width="2" height="1"/><rect x="360" y="451" width="2" height="1"/><rect x="365" y="449" width="2" height="1"/><rect x="362" y="464" width="2" height="1"/><rect x="361" y="481" width="2" height="1"/><rect x="366" y="439" width="2" height="1"/><rect x="363" y="474" width="2" height="1"/><rect x="362" y="483" width="2" height="1"/><rect x="363" y="446" width="2" height="1"/><rect x="363" y="469" width="2" height="1"/><rect x="362" y="469" width="2" height="1"/><rect x="365" y="462" width="2" height="1"/><rect x="363" y="478" width="2" height="1"/><rect x="364" y="463" width="2" height="1"/><rect x="366" y="446" width="2" height="1"/><rect x="228" y="512" width="2" height="1"/><rect x="227" y="515" width="2" height="1"/><rect x="226" y="541" width="2" height="1"/><rect x="228" y="542" width="2" height="1"/><rect x="224" y="528" width="2" height="1"/><rect x="224" y="532" width="2" height="1"/><rect x="226" y="505" width="2" height="1"/><rect x="227" y="539" width="2" height="1"/><rect x="227" y="546" width="2" height="1"/><rect x="224" y="511" width="2" height="1"/><rect x="223" y="528" width="2" height="1"/><rect x="226" y="525" width="2" height="1"/><rect x="225" y="543" width="2" height="1"/><rect x="223" y="548" width="2" height="1"/><rect x="226" y="530" width="2" height="1"/><rect x="228" y="515" width="2" height="1"/><rect x="224" y="519" width="2" height="1"/><rect x="223" y="519" width="2" height="1"/><rect x="227" y="529" width="2" height="1"/><rect x="361" y="532" width="2" height="1"/><rect x="360" y="544" width="2" height="1"/><rect x="361" y="516" width="2" height="1"/><rect x="361" y="537" width="2" height="1"/><rect x="365" y="542" width="2" height="1"/><rect x="360" y="524" width="2" height="1"/><rect x="362" y="514" width="2" height="1"/><rect x="366" y="506" width="2" height="1"/><rect x="363" y="541" width="2" height="1"/><rect x="366" y="511" width="2" height="1"/><rect x="363" y="540" width="2" height="1"/><rect x="360" y="515" width="2" height="1"/><rect x="365" y="511" width="2" height="1"/><rect x="362" y="518" width="2" height="1"/><rect x="362" y="507" width="2" height="1"/><rect x="360" y="552" width="2" height="1"/><rect x="365" y="540" width="2" height="1"/><rect x="361" y="516" width="2" height="1"/><rect x="363" y="515" width="2" height="1"/><rect x="293" y="457" width="2" height="1"/><rect x="280" y="452" width="2" height="1"/><rect x="363" y="454" width="2" height="1"/><rect x="236" y="452" width="2" height="1"/><rect x="319" y="449" width="2" height="1"/><rect x="277" y="455" width="2" height="1"/><rect x="348" y="454" width="2" height="1"/><rect x="351" y="453" width="2" height="1"/><rect x="284" y="456" width="2" height="1"/><rect x="282" y="455" width="2" height="1"/><rect x="260" y="452" width="2" height="1"/><rect x="256" y="453" width="2" height="1"/><rect x="253" y="450" width="2" height="1"/><rect x="260" y="453" width="2" height="1"/><rect x="273" y="453" width="2" height="1"/><rect x="365" y="455" width="2" height="1"/><rect x="347" y="450" width="2" height="1"/><rect x="283" y="449" width="2" height="1"/><rect x="324" y="452" width="2" height="1"/><rect x="268" y="449" width="2" height="1"/><rect x="256" y="451" width="2" height="1"/><rect x="284" y="457" width="2" height="1"/><rect x="328" y="451" width="2" height="1"/><rect x="280" y="450" width="2" height="1"/><rect x="357" y="452" width="2" height="1"/><rect x="334" y="455" width="2" height="1"/><rect x="353" y="449" width="2" height="1"/><rect x="274" y="452" width="2" height="1"/><rect x="242" y="456" width="2" height="1"/><rect x="275" y="455" width="2" height="1"/><rect x="301" y="449" width="2" height="1"/><rect x="284" y="451" width="2" height="1"/><rect x="237" y="450" width="2" height="1"/><rect x="310" y="536" width="2" height="1"/><rect x="270" y="540" width="2" height="1"/><rect x="303" y="537" width="2" height="1"/><rect x="325" y="539" width="2" height="1"/><rect x="328" y="543" width="2" height="1"/><rect x="247" y="538" width="2" height="1"/><rect x="266" y="544" width="2" height="1"/><rect x="283" y="540" width="2" height="1"/><rect x="347" y="538" width="2" height="1"/><rect x="268" y="540" width="2" height="1"/><rect x="257" y="536" width="2" height="1"/><rect x="230" y="543" width="2" height="1"/><rect x="306" y="545" width="2" height="1"/><rect x="363" y="539" width="2" height="1"/><rect x="320" y="546" width="2" height="1"/><rect x="257" y="543" width="2" height="1"/><rect x="320" y="546" width="2" height="1"/><rect x="348" y="538" width="2" height="1"/><rect x="315" y="537" width="2" height="1"/><rect x="286" y="540" width="2" height="1"/><rect x="235" y="540" width="2" height="1"/><rect x="273" y="541" width="2" height="1"/><rect x="266" y="538" width="2" height="1"/><rect x="283" y="541" width="2" height="1"/><rect x="250" y="543" width="2" height="1"/><rect x="260" y="537" width="2" height="1"/><rect x="275" y="540" width="2" height="1"/><rect x="248" y="542" width="2" height="1"/><rect x="324" y="542" width="2" height="1"/><rect x="324" y="536" width="2" height="1"/><rect x="281" y="540" width="2" height="1"/><rect x="236" y="540" width="2" height="1"/><rect x="235" y="541" width="2" height="1"/><rect x="308" y="541" width="2" height="1"/><rect x="272" y="539" width="2" height="1"/><rect x="230" y="540" width="2" height="1"/><rect x="351" y="542" width="2" height="1"/><rect x="263" y="543" width="2" height="1"/><rect x="253" y="541" width="2" height="1"/><rect x="313" y="546" width="2" height="1"/><rect x="277" y="542" width="2" height="1"/><rect x="358" y="544" width="2" height="1"/></g>
<g fill="#a9a9a9"><rect x="226" y="472" width="1" height="2"/><rect x="225" y="464" width="1" height="2"/><rect x="224" y="480" width="1" height="2"/><rect x="227" y="462" width="1" height="2"/><rect x="227" y="449" width="1" height="2"/><rect x="223" y="467" width="1" height="2"/><rect x="224" y="461" width="1" height="2"/><rect x="228" y="453" width="1" height="2"/><rect x="224" y="456" width="1" height="2"/><rect x="226" y="456" width="1" height="2"/><rect x="223" y="469" width="1" height="2"/><rect x="225" y="457" width="1" height="2"/><rect x="225" y="473" width="1" height="2"/><rect x="226" y="472" width="1" height="2"/><rect x="226" y="480" width="1" height="2"/><rect x="228" y="460" width="1" height="2"/><rect x="225" y="482" width="1" height="2"/><rect x="224" y="476" width="1" height="2"/><rect x="226" y="474" width="1" height="2"/><rect x="228" y="480" width="1" height="2"/><rect x="224" y="472" width="1" height="2"/><rect x="225" y="470" width="1" height="2"/><rect x="225" y="458" width="1" height="2"/><rect x="227" y="468" width="1" height="2"/><rect x="224" y="457" width="1" height="2"/><rect x="224" y="454" width="1" height="2"/><rect x="225" y="452" width="1" height="2"/><rect x="223" y="450" width="1" height="2"/><rect x="223" y="475" width="1" height="2"/><rect x="223" y="465" width="1" height="2"/><rect x="227" y="466" width="1" height="2"/><rect x="224" y="482" width="1" height="2"/><rect x="227" y="449" width="1" height="2"/><rect x="224" y="467" width="1" height="2"/><rect x="227" y="463" width="1" height="2"/><rect x="226" y="457" width="1" height="2"/><rect x="226" y="460" width="1" height="2"/><rect x="224" y="477" width="1" height="2"/><rect x="227" y="480" width="1" height="2"/><rect x="226" y="464" width="1" height="2"/><rect x="226" y="472" width="1" height="2"/><rect x="227" y="479" width="1" height="2"/><rect x="223" y="462" width="1" height="2"/><rect x="226" y="456" width="1" height="2"/><rect x="224" y="448" width="1" height="2"/><rect x="226" y="485" width="1" height="2"/><rect x="228" y="452" width="1" height="2"/><rect x="226" y="464" width="1" height="2"/><rect x="226" y="463" width="1" height="2"/><rect x="227" y="487" width="1" height="2"/><rect x="223" y="536" width="1" height="2"/><rect x="223" y="516" width="1" height="2"/><rect x="224" y="537" width="1" height="2"/><rect x="228" y="519" width="1" height="2"/><rect x="224" y="516" width="1" height="2"/><rect x="226" y="529" width="1" height="2"/><rect x="225" y="524" width="1" height="2"/><rect x="227" y="540" width="1" height="2"/><rect x="224" y="527" width="1" height="2"/><rect x="226" y="538" width="1" height="2"/><rect x="228" y="527" width="1" height="2"/><rect x="226" y="531" width="1" height="2"/><rect x="227" y="519" width="1" height="2"/><rect x="224" y="518" width="1" height="2"/><rect x="227" y="523" width="1" height="2"/><rect x="225" y="519" width="1" height="2"/><rect x="224" y="516" width="1" height="2"/><rect x="226" y="519" width="1" height="2"/><rect x="226" y="523" width="1" height="2"/><rect x="224" y="529" width="1" height="2"/><rect x="225" y="523" width="1" height="2"/><rect x="223" y="517" width="1" height="2"/><rect x="227" y="524" width="1" height="2"/><rect x="223" y="520" width="1" height="2"/><rect x="225" y="545" width="1" height="2"/><rect x="224" y="541" width="1" height="2"/><rect x="225" y="527" width="1" height="2"/><rect x="227" y="527" width="1" height="2"/><rect x="223" y="532" width="1" height="2"/><rect x="226" y="534" width="1" height="2"/><rect x="224" y="543" width="1" height="2"/><rect x="227" y="545" width="1" height="2"/><rect x="225" y="540" width="1" height="2"/><rect x="226" y="520" width="1" height="2"/><rect x="223" y="520" width="1" height="2"/><rect x="223" y="517" width="1" height="2"/><rect x="225" y="538" width="1" height="2"/><rect x="363" y="471" width="1" height="2"/><rect x="361" y="462" width="1" height="2"/><rect x="367" y="455" width="1" height="2"/><rect x="364" y="481" width="1" height="2"/><rect x="366" y="479" width="1" height="2"/><rect x="363" y="481" width="1" height="2"/><rect x="366" y="480" width="1" height="2"/><rect x="367" y="458" width="1" height="2"/><rect x="367" y="468" width="1" height="2"/><rect x="365" y="463" width="1" height="2"/><rect x="366" y="456" width="1" height="2"/><rect x="364" y="462" width="1" height="2"/><rect x="363" y="467" width="1" height="2"/><rect x="365" y="481" width="1" height="2"/><rect x="363" y="475" width="1" height="2"/><rect x="363" y="464" width="1" height="2"/><rect x="366" y="465" width="1" height="2"/><rect x="362" y="466" width="1" height="2"/><rect x="365" y="462" width="1" height="2"/><rect x="365" y="472" width="1" height="2"/><rect x="365" y="461" width="1" height="2"/><rect x="362" y="460" width="1" height="2"/><rect x="363" y="469" width="1" height="2"/><rect x="361" y="471" width="1" height="2"/><rect x="363" y="465" width="1" height="2"/><rect x="364" y="485" width="1" height="2"/><rect x="362" y="483" width="1" height="2"/><rect x="363" y="479" width="1" height="2"/><rect x="362" y="487" width="1" height="2"/><rect x="364" y="486" width="1" height="2"/><rect x="362" y="468" width="1" height="2"/><rect x="365" y="461" width="1" height="2"/><rect x="363" y="477" width="1" height="2"/><rect x="367" y="465" width="1" height="2"/><rect x="362" y="466" width="1" height="2"/><rect x="367" y="460" width="1" height="2"/><rect x="365" y="467" width="1" height="2"/><rect x="365" y="462" width="1" height="2"/><rect x="365" y="483" width="1" height="2"/><rect x="366" y="475" width="1" height="2"/><rect x="364" y="473" width="1" height="2"/><rect x="362" y="482" width="1" height="2"/><rect x="365" y="470" width="1" height="2"/><rect x="365" y="468" width="1" height="2"/><rect x="363" y="462" width="1" height="2"/><rect x="365" y="473" width="1" height="2"/><rect x="364" y="456" width="1" height="2"/><rect x="365" y="469" width="1" height="2"/><rect x="365" y="530" width="1" height="2"/><rect x="367" y="517" width="1" height="2"/><rect x="364" y="542" width="1" height="2"/><rect x="365" y="521" width="1" height="2"/><rect x="365" y="542" width="1" height="2"/><rect x="363" y="538" width="1" height="2"/><rect x="362" y="542" width="1" height="2"/><rect x="364" y="519" width="1" height="2"/><rect x="366" y="531" width="1" height="2"/><rect x="367" y="537" width="1" height="2"/><rect x="366" y="527" width="1" height="2"/><rect x="367" y="514" width="1" height="2"/><rect x="366" y="533" width="1" height="2"/><rect x="363" y="536" width="1" height="2"/><rect x="364" y="528" width="1" height="2"/><rect x="366" y="518" width="1" height="2"/><rect x="363" y="531" width="1" height="2"/><rect x="361" y="529" width="1" height="2"/><rect x="366" y="527" width="1" height="2"/><rect x="362" y="536" width="1" height="2"/><rect x="366" y="535" width="1" height="2"/><rect x="364" y="539" width="1" height="2"/><rect x="366" y="517" width="1" height="2"/><rect x="363" y="515" width="1" height="2"/><rect x="361" y="522" width="1" height="2"/><rect x="366" y="537" width="1" height="2"/><rect x="362" y="517" width="1" height="2"/><rect x="363" y="537" width="1" height="2"/><rect x="365" y="539" width="1" height="2"/><rect x="361" y="542" width="1" height="2"/><rect x="362" y="531" width="1" height="2"/><rect x="366" y="534" width="1" height="2"/><rect x="362" y="532" width="1" height="2"/><rect x="364" y="512" width="1" height="2"/><rect x="363" y="521" width="1" height="2"/><rect x="365" y="520" width="1" height="2"/><rect x="365" y="533" width="1" height="2"/><rect x="362" y="516" width="1" height="2"/><rect x="365" y="526" width="1" height="2"/><rect x="362" y="515" width="1" height="2"/><rect x="367" y="530" width="1" height="2"/><rect x="363" y="518" width="1" height="2"/><rect x="367" y="533" width="1" height="2"/><rect x="365" y="523" width="1" height="2"/><rect x="363" y="524" width="1" height="2"/></g>
<g fill="#f00000"><rect x="152" y="400" width="3" height="10"/><rect x="155" y="401" width="3" height="19"/><rect x="167.5" y="409" width="3.5" height="10"/><rect x="224.6" y="439" width="4" height="14"/><rect x="222.5" y="504" width="4" height="10"/><rect x="226" y="505" width="4" height="9"/><rect x="360.2" y="477.5" width="3" height="8"/><rect x="362" y="480" width="3" height="7"/><rect x="360.5" y="504" width="7" height="11"/><rect x="236" y="585" width="2" height="2"/><rect x="365" y="404" width="2" height="2"/><rect x="337" y="422" width="2" height="2"/><rect x="382" y="562" width="2" height="2"/><rect x="352" y="561" width="2" height="2"/><rect x="350" y="584" width="2" height="2"/><rect x="381" y="586" width="2" height="2"/><rect x="297" y="565" width="2" height="2"/><rect x="297" y="570" width="2" height="2"/><rect x="298" y="588" width="2" height="3"/><rect x="219" y="583" width="2" height="3"/><rect x="379" y="580" width="2" height="2"/></g>
<g fill="#f2ee00"><rect x="294" y="466" width="1.1" height="1.1"/><rect x="299" y="467" width="1.1" height="1.1"/><rect x="304" y="472" width="1.1" height="1.1"/><rect x="311" y="472" width="1.1" height="1.1"/><rect x="270" y="481" width="1.1" height="1.1"/><rect x="280" y="480" width="1.1" height="1.1"/><rect x="285" y="480" width="1.1" height="1.1"/><rect x="290" y="481" width="1.1" height="1.1"/><rect x="297" y="480" width="1.1" height="1.1"/><rect x="300" y="482" width="1.1" height="1.1"/><rect x="318" y="480" width="1.1" height="1.1"/><rect x="290" y="509" width="1.1" height="1.1"/><rect x="295" y="510" width="1.1" height="1.1"/><rect x="301" y="511" width="1.1" height="1.1"/><rect x="312" y="509" width="1.1" height="1.1"/><rect x="283" y="522" width="1.1" height="1.1"/><rect x="287" y="523" width="1.1" height="1.1"/><rect x="306" y="522" width="1.1" height="1.1"/><rect x="262" y="482" width="1.1" height="1.1"/><rect x="262" y="490" width="1.1" height="1.1"/><rect x="261" y="505" width="1.1" height="1.1"/><rect x="331" y="480" width="1.1" height="1.1"/><rect x="332" y="490" width="1.1" height="1.1"/><rect x="333" y="508" width="1.1" height="1.1"/><rect x="240" y="503" width="1.1" height="1.1"/><rect x="349" y="472" width="1.1" height="1.1"/><rect x="345" y="478" width="1.1" height="1.1"/><rect x="245" y="470" width="1.1" height="1.1"/><rect x="339" y="520" width="1.1" height="1.1"/><rect x="259" y="516" width="1.1" height="1.1"/><rect x="300" y="513" width="1.1" height="1.1"/><rect x="297" y="514" width="1.1" height="1.1"/><rect x="276" y="512" width="1.1" height="1.1"/></g>
<g fill="#e8a000"><rect x="266" y="487" width="1" height="2"/><rect x="266" y="492" width="1" height="2"/><rect x="266" y="498" width="1" height="2"/><rect x="266" y="503" width="1" height="2"/><rect x="324" y="487" width="1" height="2"/><rect x="324" y="492" width="1" height="2"/><rect x="324" y="498" width="1" height="2"/><rect x="324" y="503" width="1" height="2"/></g>
<g shape-rendering="auto" stroke="#1fe0e6" stroke-width="1.4" fill="none"><path d="M295.5 495.3L234.7 455"/><path d="M295.5 495.3L297 535.5"/><path d="M295.5 495.3L284 486.5"/></g>
<rect x="294.0" y="494.3" width="3" height="2" fill="#ff00ff"/>
</svg>
<div class="abs" style="left:0;top:397px;width:1px;height:194px;background:#5f85cc"></div><div class="abs" style="left:1px;top:398.6px;width:1px;height:193px;background:#fff"></div>
<svg class="abs" style="left:0;top:580px" width="8" height="11"><path d="M0 5.5L5.5 11M0 8.5L2.5 11" stroke="#e8e8e8" stroke-width="1.2"/></svg>
<div class="abs" style="left:589px;top:88px;width:652px;height:241px;background:#000"></div>
<div class="abs" style="left:588.6px;top:88px;width:3.4px;height:503px;background:linear-gradient(90deg,#5a5a5a,#a8a8a8 60%,#c8c8c8)"></div>
<div class="abs" style="left:590px;top:88.2px;width:649px;height:239.8px;background:#eee;border-radius:5px 5px 0 0"></div>
<div class="abs" style="left:590px;top:88.2px;width:649px;height:21.8px;background:linear-gradient(#767676,#818181 12%,#878787 50%,#909090);border-radius:5px 5px 0 0;border-bottom:1px solid #5f5f5f;border-left:1px solid #6a6a6a"></div>
<div class="abs" style="left:599.2px;top:93.5px;width:11px;height:11px;border-radius:50%;background:linear-gradient(#7d7d7d,#9a9a9a);border:1px solid #6b6b6b"></div>
<div class="abs" style="left:619.2px;top:93.5px;width:11px;height:11px;border-radius:50%;background:linear-gradient(#7d7d7d,#9a9a9a);border:1px solid #6b6b6b"></div>
<div class="abs" style="left:639.3px;top:93.5px;width:11px;height:11px;border-radius:50%;background:linear-gradient(#7d7d7d,#9a9a9a);border:1px solid #6b6b6b"></div>
<div class="t c" style="left:590px;top:91px;width:649px;color:#3a3a3a;font-size:13px;letter-spacing:-0.05px">HYPATIA – Track Momenta Window</div>
<div class="abs" style="left:591px;top:110px;width:35px;height:37px;background:linear-gradient(#bcbcbc,#d4d4d4 45%,#dedede)"></div>
<div class="t b" style="left:597px;top:121px;font-size:12.5px;color:#2c2c2c">File</div>
<div class="abs" style="left:626px;top:110px;width:607px;height:37px;background:linear-gradient(#9ea6b3,#c9cfd8 38%,#c4d1e1 60%,#b8cce6 85%,#b3c9e8)"></div>
<div class="abs" style="left:960px;top:110px;width:68px;height:37px;background:linear-gradient(#a4a4a4,#d8d8d8 55%,#e6e6e6)"></div>
<div class="abs" style="left:1233px;top:110px;width:6px;height:37px;background:linear-gradient(#bdbdbd,#dedede)"></div>
<div class="t b c" style="left:618.6px;top:132px;width:129.79999999999995px;color:#303030;font-size:11.9px;letter-spacing:0">Previous Event</div>
<div class="t b c" style="left:733.4px;top:132px;width:105.10000000000002px;color:#303030;font-size:11.9px;letter-spacing:0">Next Event</div>
<div class="t b c" style="left:819.7px;top:132px;width:88.69999999999993px;color:#303030;font-size:11.9px;letter-spacing:0">Electron</div>
<div class="t b c" style="left:893.3px;top:132px;width:73.70000000000005px;color:#303030;font-size:11.9px;letter-spacing:0">Muon</div>
<div class="t b c" style="left:952.7px;top:132px;width:82.5px;color:#9a9a9a;font-size:11.9px;letter-spacing:0">Photon</div>
<div class="t b c" style="left:1020.3px;top:132px;width:116.70000000000005px;color:#303030;font-size:11.9px;letter-spacing:0">Delete Track</div>
<div class="t b c" style="left:1122.3px;top:132px;width:122.0px;color:#303030;font-size:11.9px;letter-spacing:0">Reset Canvas</div>
<svg class="abs" style="left:674.6px;top:112px" width="16" height="15"><defs><linearGradient id="ab" x1="0" y1="0" x2="0" y2="1"><stop offset="0" stop-color="#6f97cf"/><stop offset="1" stop-color="#2f5f9f"/></linearGradient></defs><path d="M0.8 7.2L9.5 0.8V3.6H15V10.8H9.5V13.6Z" fill="url(#ab)" stroke="#1d3557" stroke-width="1"/></svg>
<svg class="abs" style="left:776.4px;top:112px" width="16" height="15"><path d="M15.2 7.2L6.5 0.8V3.6H1V10.8H6.5V13.6Z" fill="url(#ab)" stroke="#1d3557" stroke-width="1"/></svg>
<div class="t b c" style="left:848.3px;top:107.6px;width:30px;font-size:22px;line-height:22px;height:22px;color:#6790c4;-webkit-text-stroke:1px #1d3557;letter-spacing:0;">e</div>
<div class="t b c" style="left:915px;top:108.4px;width:30px;font-size:18px;line-height:18px;height:18px;color:#6790c4;-webkit-text-stroke:1px #1d3557;letter-spacing:0;">μ</div>
<div class="t b c" style="left:979px;top:108px;width:30px;font-size:18px;line-height:18px;height:18px;color:#a6a6a6;-webkit-text-stroke:1px #8e8e8e;letter-spacing:0;">γ</div>
<div class="t b c" style="left:1064px;top:110.7px;width:30px;font-size:18px;line-height:18px;height:18px;color:#6790c4;-webkit-text-stroke:1px #1d3557;letter-spacing:0;transform:scaleX(.85)">X</div>
<svg class="abs" style="left:1171px;top:112px" width="21" height="15"><path d="M1.5 7.5L7 2.5M1.5 7.5L7 12.5M19.5 7.5L14 2.5M19.5 7.5L14 12.5M4.5 6h12M4.5 9h12" stroke="#2c4d7c" stroke-width="1.9" fill="none"/><path d="M1.5 7.5L7 2.5M1.5 7.5L7 12.5M19.5 7.5L14 2.5M19.5 7.5L14 12.5M4.5 6h12M4.5 9h12" stroke="#6f95c8" stroke-width="0.7" fill="none"/></svg>
<div class="abs" style="left:593.5px;top:149.5px;width:646px;height:47px;background:#ececec;border:1px solid #b4b4b4;border-top-color:#a8a8a8;border-right:0"></div>
<div class="abs" style="left:594.5px;top:150.5px;width:644px;height:12.5px;background:#f3f3f3"></div>
<div class="t mono" style="left:672.4px;top:151px;font-size:11.6px;letter-spacing:0;color:#222;line-height:12px;height:12px">ETMis: 8.258 GeV</div>
<div class="t mono" style="left:820.2px;top:151px;font-size:11.6px;letter-spacing:0;color:#222;line-height:12px;height:12px">φ: 0.541 rad</div>
<div class="t mono" style="left:941.5px;top:151px;font-size:11.6px;letter-spacing:0;color:#222;line-height:12px;height:12px">Collection: MET_RefFinal</div>
<div class="abs" style="left:596px;top:164px;width:9px;height:27px;background-image:radial-gradient(circle at 1px 1px,#9db2d6 0.7px,transparent 1px);background-size:3px 3px;background-color:#ececec;opacity:.75"></div>
<div class="abs" style="left:609px;top:167px;width:21px;height:21px;background:#ececec;border:1px solid #9a9a9a"></div>
<svg class="abs" style="left:612px;top:170px" width="16" height="16"><rect x="1" y="1.5" width="14" height="13" fill="#6f9be0" stroke="#3f6fc0"/><rect x="3" y="1" width="10" height="6.5" fill="#f4f4f4" stroke="#b0b0b0" stroke-width=".6"/><rect x="1.5" y="8" width="13" height="1.2" fill="#2f5fb8"/><rect x="3" y="10" width="10" height="4" fill="#9fc0f0"/></svg>
<div class="abs" style="left:631px;top:164px;width:442px;height:27px;background:#fff;border:1px solid #8aa0c0;border-top:1px solid #5a708f;border-bottom-color:#9fb4d0"></div>
<div class="t f13" style="left:633.5px;top:170px;color:#222;letter-spacing:0.1px">events/group04.zip/event015.xml</div>
<div class="abs" style="left:1073.5px;top:167.5px;width:20.5px;height:20.5px;background:#ededed;border:1px solid #9a9a9a"></div>
<svg class="abs" style="left:1075.7px;top:170.5px" width="17" height="16"><path d="M0.8 7.2L9.5 0.8V3.6H15V10.8H9.5V13.6Z" fill="url(#ab)" stroke="#244a86" stroke-width="1"/></svg>
<div class="abs" style="left:1095.5px;top:167.5px;width:20.5px;height:20.5px;background:#ededed;border:1px solid #9a9a9a"></div>
<svg class="abs" style="left:1097.7px;top:170.5px" width="17" height="16"><path d="M15.2 7.2L6.5 0.8V3.6H1V10.8H6.5V13.6Z" fill="url(#ab)" stroke="#244a86" stroke-width="1"/></svg>
<div class="abs" style="left:1127px;top:164px;width:108px;height:28px;background:#f6f6f6"></div>
<svg class="abs" style="left:1127px;top:164px" width="108" height="28" fill="none" stroke="#111">
<circle cx="10.3" cy="14.6" r="4.1" stroke-width="1.1"/><circle cx="10.3" cy="14.6" r="1.4" fill="#111" stroke="none"/>
<path d="M18 14.6h8.5M23.5 11.6l3.4 3l-3.4 3" stroke-width="1.8"/>
<circle cx="46.5" cy="14.6" r="4.1" stroke-width="1.1"/>
<path d="M56.5 8.5v9q0 2.2 2.2 2.2h1.8M53.8 11.2h5.4M63.2 20V11q0-2.2-2.2-2.2h-1.2" stroke-width="2.2"/><path d="M60.6 17.6l2.6 3.4l2.6-3.4z" fill="#111" stroke="none"/>
<circle cx="82.5" cy="14.6" r="4.1" stroke-width="1.1"/>
<path d="M90 8l5-2l5 4l2 7l-5 4l-6-3z" fill="#fff" stroke-width="1"/><path d="M92 10h2M96 9v2M93 15h2M98 14v2M95 18h2M99 18h1M91 13h1" stroke-width="1.4"/>
</svg>
<div class="abs" style="left:591.5px;top:217px;width:647.5px;height:106px;background:#c8ddf2;border:1px solid #6382bf;border-bottom:1px solid #6382bf"></div>
<div class="abs" style="left:594px;top:223px;width:641.5px;height:97px;background:#eef2f8;border:1px solid #6382bf"></div>
<div class="abs" style="left:593px;top:199px;width:640px;height:18px;background:#eee"></div>
<div class="abs" style="left:745px;top:217px;width:494px;height:1px;background:#6382bf"></div>
<svg class="abs" style="left:593px;top:199px" width="153" height="20"><path d="M0.5 20V5.5L5.5 0.5H152.5V20" fill="#c8ddf2" stroke="#6382bf" stroke-width="1"/></svg>
<div class="t b c" style="left:593px;top:201.0px;width:152px;font-size:12.15px;color:#333;letter-spacing:0px">Tracks</div>
<svg class="abs" style="left:745px;top:199px" width="208" height="19"><path d="M0.5 19V5.5L5.5 0.5H207.5V19" fill="#eeeeee" stroke="#7a8a99" stroke-width="1"/></svg>
<div class="t b c" style="left:745px;top:200.5px;width:207px;font-size:12.15px;color:#333;letter-spacing:0px">Physics Objects</div>
<div class="abs" style="left:594px;top:217px;width:151px;height:1.2px;background:#c8ddf2"></div>
<div class="abs" style="left:592px;top:218px;width:24px;height:6px;background:#c8ddf2"></div>
<div class="abs" style="left:595px;top:227px;width:636px;height:84px;background:#fff"></div>
<div class="abs" style="left:595px;top:227px;width:636px;height:19px;background:#eee"></div>
<div class="abs" style="left:595px;top:311px;width:636px;height:8px;background:#eee"></div>
<div class="abs" style="left:595px;top:227px;width:636px;height:1px;background:#7a8a99"></div>
<div class="abs" style="left:595px;top:246px;width:637px;height:1px;background:#7a8a99"></div>
<div class="abs" style="left:595px;top:262px;width:637px;height:1px;background:#7a8a99"></div>
<div class="abs" style="left:595px;top:278px;width:637px;height:1px;background:#7a8a99"></div>
<div class="abs" style="left:595px;top:294px;width:637px;height:1px;background:#7a8a99"></div>
<div class="abs" style="left:595px;top:310px;width:637px;height:1px;background:#7a8a99"></div>
<div class="abs" style="left:595px;top:319px;width:637px;height:1px;background:#7a8a99"></div>
<div class="abs" style="left:595px;top:227px;width:1px;height:93px;background:#7a8a99"></div>
<div class="abs" style="left:772px;top:227px;width:1px;height:84px;background:#7a8a99"></div>
<div class="abs" style="left:773px;top:228px;width:1px;height:18px;background:#fff"></div>
<div class="abs" style="left:824px;top:227px;width:1px;height:84px;background:#7a8a99"></div>
<div class="abs" style="left:825px;top:228px;width:1px;height:18px;background:#fff"></div>
<div class="abs" style="left:925px;top:227px;width:1px;height:84px;background:#7a8a99"></div>
<div class="abs" style="left:926px;top:228px;width:1px;height:18px;background:#fff"></div>
<div class="abs" style="left:1026px;top:227px;width:1px;height:84px;background:#7a8a99"></div>
<div class="abs" style="left:1027px;top:228px;width:1px;height:18px;background:#fff"></div>
<div class="abs" style="left:1129px;top:227px;width:1px;height:84px;background:#7a8a99"></div>
<div class="abs" style="left:1130px;top:228px;width:1px;height:18px;background:#fff"></div>
<div class="abs" style="left:1231px;top:227px;width:1px;height:93px;background:#7a8a99"></div>
<div class="t f13 c" style="left:596px;top:230px;width:176px;color:#222">Track</div>
<div class="t f13 c" style="left:773px;top:230px;width:51px;color:#222">+/-</div>
<div class="t f13 c" style="left:825px;top:230px;width:100px;color:#222">P [GeV]</div>
<div class="t f13 c" style="left:926px;top:230px;width:100px;color:#222">Pt [GeV]</div>
<div class="t f13 c" style="left:1027px;top:230px;width:102px;color:#222">φ</div>
<div class="t f13 c" style="left:1130px;top:230px;width:101px;color:#222">θ</div>
<div class="t f13" style="left:596.2px;top:246.5px;letter-spacing:0.25px">Tracks 6</div>
<div class="t f13" style="left:774.5px;top:246.5px;">+</div>
<div class="t f13" style="left:826.5px;top:246.5px;letter-spacing:0.4px">153.74</div>
<div class="t f13" style="left:927.5px;top:246.5px;letter-spacing:0.4px">84.09</div>
<div class="t f13" style="left:1028.5px;top:246.5px;letter-spacing:0.4px">2.378</div>
<div class="t f13" style="left:1131.5px;top:246.5px;letter-spacing:0.4px">2.563</div>
<div class="t f13" style="left:596.2px;top:262.5px;letter-spacing:0.25px">Tracks 8</div>
<div class="t f13" style="left:774.5px;top:262.5px;">-</div>
<div class="t f13" style="left:826.5px;top:262.5px;letter-spacing:0.4px">76.79</div>
<div class="t f13" style="left:927.5px;top:262.5px;letter-spacing:0.4px">75.28</div>
<div class="t f13" style="left:1028.5px;top:262.5px;letter-spacing:0.4px">-0.804</div>
<div class="t f13" style="left:1131.5px;top:262.5px;letter-spacing:0.4px">1.372</div>
<div class="t f13" style="left:596.2px;top:278.5px;letter-spacing:0.25px">Tracks 11</div>
<div class="t f13" style="left:774.5px;top:278.5px;">+</div>
<div class="t f13" style="left:826.5px;top:278.5px;letter-spacing:0.4px">67.65</div>
<div class="t f13" style="left:927.5px;top:278.5px;letter-spacing:0.4px">44.90</div>
<div class="t f13" style="left:1028.5px;top:278.5px;letter-spacing:0.4px">0.154</div>
<div class="t f13" style="left:1131.5px;top:278.5px;letter-spacing:0.4px">2.416</div>
<div class="t f13" style="left:596.2px;top:294.5px;letter-spacing:0.25px">Tracks 72</div>
<div class="t f13" style="left:774.5px;top:294.5px;">-</div>
<div class="t f13" style="left:826.5px;top:294.5px;letter-spacing:0.4px">35.46</div>
<div class="t f13" style="left:927.5px;top:294.5px;letter-spacing:0.4px">35.44</div>
<div class="t f13" style="left:1028.5px;top:294.5px;letter-spacing:0.4px">-2.835</div>
<div class="t f13" style="left:1131.5px;top:294.5px;letter-spacing:0.4px">1.544</div>
<div class="abs" style="left:591px;top:323px;width:648px;height:4px;background:#e4eaf2"></div>
<div class="abs" style="left:592px;top:326.8px;width:649px;height:6px;background:#000"></div>
<div class="abs" style="left:1239px;top:327px;width:2px;height:264px;background:#000"></div>
<div class="abs" style="left:592px;top:328px;width:647px;height:263px;background:#eee;border-radius:5px 5px 0 0"></div>
<div class="abs" style="left:592px;top:328px;width:647px;height:21.5px;background:linear-gradient(#f6f6f6,#e6e6e6 50%,#d6d6d6);border-radius:5px 5px 0 0;border-bottom:1px solid #b0b0b0"></div>
<div class="abs" style="left:600.3px;top:333.4px;width:11px;height:11px;border-radius:50%;background:linear-gradient(#dcdcdc,#f4f4f4);border:1px solid #b4b4b4"></div>
<div class="abs" style="left:620.3px;top:333.4px;width:11px;height:11px;border-radius:50%;background:linear-gradient(#dcdcdc,#f4f4f4);border:1px solid #b4b4b4"></div>
<div class="abs" style="left:640.3px;top:333.4px;width:11px;height:11px;border-radius:50%;background:linear-gradient(#dcdcdc,#f4f4f4);border:1px solid #b4b4b4"></div>
<div class="t c" style="left:592px;top:331px;width:647px;color:#7a7a7a;font-size:13px;letter-spacing:-0.05px">HYPATIA – Control Window</div>
<div class="abs" style="left:592px;top:370px;width:596.5px;height:222px;background:#c8ddf2;border:1px solid #6382bf;border-right-color:#9db4dc"></div>
<svg class="abs" style="left:594.5px;top:352.5px" width="135.0" height="19.5"><path d="M0.5 19.5V5.5L5.5 0.5H134.5V19.5" fill="#c8ddf2" stroke="#6382bf" stroke-width="1"/></svg>
<div class="t b c" style="left:594.5px;top:354.25px;width:134.0px;font-size:12.15px;color:#333;letter-spacing:0px">Parameter Control</div>
<svg class="abs" style="left:728.5px;top:352.5px" width="219.79999999999995" height="18.5"><path d="M0.5 18.5V5.5L5.5 0.5H219.29999999999995V18.5" fill="#eeeeee" stroke="#7a8a99" stroke-width="1"/></svg>
<div class="t b c" style="left:728.5px;top:353.75px;width:218.79999999999995px;font-size:12.15px;color:#333;letter-spacing:0.05px">Interaction and Window Control</div>
<svg class="abs" style="left:947.3px;top:352.5px" width="116.20000000000005" height="18.5"><path d="M0.5 18.5V5.5L5.5 0.5H115.70000000000005V18.5" fill="#eeeeee" stroke="#7a8a99" stroke-width="1"/></svg>
<div class="t b c" style="left:947.3px;top:353.75px;width:115.20000000000005px;font-size:12.15px;color:#333;letter-spacing:0.2px">Output Display</div>
<div class="abs" style="left:595.5px;top:370px;width:132.5px;height:1.5px;background:#c8ddf2"></div>
<div class="abs" style="left:594.5px;top:393.5px;width:591px;height:195.5px;background:#c8ddf2;border:1px solid #6382bf;border-right-color:#9db4dc"></div>
<div class="abs" style="left:593px;top:589px;width:595px;height:2px;background:#b6c6da"></div>
<div class="abs" style="left:595.5px;top:374px;width:590px;height:20px;background:#eee"></div>
<svg class="abs" style="left:597.2px;top:376.5px" width="83.29999999999995" height="18.0"><path d="M0.5 18.0V5.5L5.5 0.5H82.79999999999995V18.0" fill="#eeeeee" stroke="#7a8a99" stroke-width="1"/></svg>
<div class="t b c" style="left:597.2px;top:377.5px;width:82.29999999999995px;font-size:12.15px;color:#333;letter-spacing:0px">Projection</div>
<svg class="abs" style="left:679.5px;top:376.5px" width="51.10000000000002" height="18.0"><path d="M0.5 18.0V5.5L5.5 0.5H50.60000000000002V18.0" fill="#eeeeee" stroke="#7a8a99" stroke-width="1"/></svg>
<div class="t b c" style="left:679.5px;top:377.5px;width:50.10000000000002px;font-size:12.15px;color:#333;letter-spacing:0px">Data</div>
<svg class="abs" style="left:729.6px;top:376.5px" width="50.799999999999955" height="19.0"><path d="M0.5 19.0V5.5L5.5 0.5H50.299999999999955V19.0" fill="#c8ddf2" stroke="#6382bf" stroke-width="1"/></svg>
<div class="t b c" style="left:729.6px;top:377.5px;width:49.799999999999955px;font-size:12.15px;color:#333;letter-spacing:0px">Cuts</div>
<svg class="abs" style="left:779.4px;top:376.5px" width="55.700000000000045" height="18.0"><path d="M0.5 18.0V5.5L5.5 0.5H55.200000000000045V18.0" fill="#eeeeee" stroke="#7a8a99" stroke-width="1"/></svg>
<div class="t b c" style="left:779.4px;top:377.5px;width:54.700000000000045px;font-size:12.15px;color:#333;letter-spacing:0px">InDet</div>
<svg class="abs" style="left:834.1px;top:376.5px" width="50.299999999999955" height="18.0"><path d="M0.5 18.0V5.5L5.5 0.5H49.799999999999955V18.0" fill="#eeeeee" stroke="#7a8a99" stroke-width="1"/></svg>
<div class="t b c" style="left:834.1px;top:377.5px;width:49.299999999999955px;font-size:12.15px;color:#333;letter-spacing:0px">Calo</div>
<svg class="abs" style="left:883.4px;top:376.5px" width="78.30000000000007" height="18.0"><path d="M0.5 18.0V5.5L5.5 0.5H77.80000000000007V18.0" fill="#eeeeee" stroke="#7a8a99" stroke-width="1"/></svg>
<div class="t b c" style="left:883.4px;top:377.5px;width:77.30000000000007px;font-size:12.15px;color:#333;letter-spacing:0px">MuonDet</div>
<svg class="abs" style="left:960.7px;top:376.5px" width="69.79999999999995" height="18.0"><path d="M0.5 18.0V5.5L5.5 0.5H69.29999999999995V18.0" fill="#eeeeee" stroke="#7a8a99" stroke-width="1"/></svg>
<div class="t b c" style="left:960.7px;top:377.5px;width:68.79999999999995px;font-size:12.15px;color:#333;letter-spacing:0px">Objects</div>
<svg class="abs" style="left:1029.5px;top:376.5px" width="81.0" height="18.0"><path d="M0.5 18.0V5.5L5.5 0.5H80.5V18.0" fill="#eeeeee" stroke="#7a8a99" stroke-width="1"/></svg>
<div class="t b c" style="left:1029.5px;top:377.5px;width:80.0px;font-size:12.15px;color:#333;letter-spacing:0px">Geometry</div>
<div class="abs" style="left:730.6px;top:393.5px;width:48.3px;height:1.5px;background:#c8ddf2"></div>
<svg class="abs" style="left:598.5px;top:400.8px" width="79.20000000000005" height="19.2"><path d="M79.20000000000005 0.5H5.5L0.5 5.5V18.2H79.20000000000005" fill="#c8ddf2" stroke="#6382bf" stroke-width="1"/></svg>
<div class="t b c" style="left:597px;top:402.2px;width:78.20000000000005px;font-size:12.4px;color:#333">InDet</div>
<svg class="abs" style="left:598.5px;top:418.5px" width="79.20000000000005" height="19.2"><path d="M79.20000000000005 0.5H5.5L0.5 5.5V18.2H79.20000000000005" fill="#eee" stroke="#7a8a99" stroke-width="1"/></svg>
<div class="t b c" style="left:597px;top:419.9px;width:78.20000000000005px;font-size:12.4px;color:#333">Calo</div>
<svg class="abs" style="left:598.5px;top:436.2px" width="79.20000000000005" height="19.2"><path d="M79.20000000000005 0.5H5.5L0.5 5.5V18.2H79.20000000000005" fill="#eee" stroke="#7a8a99" stroke-width="1"/></svg>
<div class="t b c" style="left:597px;top:437.59999999999997px;width:78.20000000000005px;font-size:12.4px;color:#333">MuonDet</div>
<svg class="abs" style="left:598.5px;top:453.9px" width="79.20000000000005" height="19.2"><path d="M79.20000000000005 0.5H5.5L0.5 5.5V18.2H79.20000000000005" fill="#eee" stroke="#7a8a99" stroke-width="1"/></svg>
<div class="t b c" style="left:597px;top:455.29999999999995px;width:78.20000000000005px;font-size:12.4px;color:#333">Objects</div>
<svg class="abs" style="left:598.5px;top:471.6px" width="79.20000000000005" height="19.2"><path d="M79.20000000000005 0.5H5.5L0.5 5.5V18.2H79.20000000000005" fill="#eee" stroke="#7a8a99" stroke-width="1"/></svg>
<div class="t b c" style="left:597px;top:473.0px;width:78.20000000000005px;font-size:12.4px;color:#333">ATLAS</div>
<div class="abs" style="left:677px;top:398px;width:505.5px;height:188px;background:#c8ddf2;border:1px solid #6382bf;border-right-color:#9db4dc"></div>
<div class="abs" style="left:678px;top:402px;width:502.5px;height:182.5px;background:#f0f0f0;border:1px solid #b4c9e8"></div>
<div class="abs" style="left:676px;top:401.6px;width:2px;height:16.4px;background:#c8ddf2"></div>
<div class="abs" style="left:679px;top:407.5px;width:500px;height:176px;background:#eee"></div>
<div class="abs" style="left:679px;top:407.5px;width:484px;height:19px;background:#eee;border:1px solid #7a8a99"></div>
<div class="abs" style="left:925px;top:408.5px;width:1px;height:18px;background:#7a8a99"></div>
<div class="abs" style="left:926px;top:408.5px;width:1px;height:17px;background:#fff"></div>
<div class="abs" style="left:1162px;top:407.5px;width:17px;height:19px;background:#eee;border:1px solid #7a8a99"></div>
<div class="t f13 c" style="left:679px;top:410px;width:246px;color:#222">Name</div>
<div class="t f13 c" style="left:926px;top:410px;width:237px;color:#222">Value</div>
<div class="abs" style="left:679px;top:428px;width:225px;height:22.7px;background:#c9c9c9"></div>
<div class="abs" style="left:679px;top:450.7px;width:225px;height:2.3px;background:#e6e6e6"></div>
<div class="abs" style="left:926.5px;top:427.5px;width:236px;height:23px;background:#fff;border:1px solid #7a8a99;border-top:1.5px solid #6c7c8c"></div>
<div class="abs" style="left:683px;top:433px;width:12.5px;height:12.5px;background:linear-gradient(135deg,#fff,#c4d6ee);border:1px solid #6a7a8a"></div>
<svg class="abs" style="left:684px;top:434px" width="11" height="11"><path d="M1.6 5L2.2 8L4.6 9.8L9.8 2.2L8.4 2.2L4.6 6.6L3.2 4.6Z" fill="#111"/></svg>
<div class="t b" style="left:700.5px;top:431.5px;color:#0000f0;font-size:12.3px;letter-spacing:-0.2px">|Pt|</div>
<div class="t f13" style="left:909.5px;top:431.5px;color:#222">></div>
<div class="t f13" style="left:929px;top:431.5px;color:#333;letter-spacing:0.3px">12.0 GeV</div>
<div class="abs" style="left:679px;top:453px;width:225px;height:22.7px;background:#c9c9c9"></div>
<div class="abs" style="left:679px;top:475.7px;width:225px;height:2.3px;background:#e6e6e6"></div>
<div class="abs" style="left:926.5px;top:452.5px;width:236px;height:23px;background:#fff;border:1px solid #7a8a99;border-top:1.5px solid #6c7c8c"></div>
<div class="abs" style="left:683px;top:458px;width:12.5px;height:12.5px;background:linear-gradient(135deg,#fff,#c4d6ee);border:1px solid #6a7a8a"></div>
<svg class="abs" style="left:684px;top:459px" width="11" height="11"><path d="M1.6 5L2.2 8L4.6 9.8L9.8 2.2L8.4 2.2L4.6 6.6L3.2 4.6Z" fill="#111"/></svg>
<div class="t b" style="left:700.5px;top:456.5px;color:#0000f0;font-size:12.3px;letter-spacing:0">|d0|</div>
<div class="t f13" style="left:909.5px;top:456.5px;color:#222"><</div>
<div class="t f13" style="left:929px;top:456.5px;color:#333;letter-spacing:0.3px">2.5 mm</div>
<div class="abs" style="left:679px;top:478px;width:225px;height:22.7px;background:#c9c9c9"></div>
<div class="abs" style="left:679px;top:500.7px;width:225px;height:2.3px;background:#e6e6e6"></div>
<div class="abs" style="left:926.5px;top:477.5px;width:236px;height:23px;background:#fff;border:1px solid #7a8a99;border-top:1.5px solid #6c7c8c"></div>
<div class="abs" style="left:683px;top:483px;width:12.5px;height:12.5px;background:linear-gradient(135deg,#fff,#c4d6ee);border:1px solid #6a7a8a"></div>
<svg class="abs" style="left:684px;top:484px" width="11" height="11"><path d="M1.6 5L2.2 8L4.6 9.8L9.8 2.2L8.4 2.2L4.6 6.6L3.2 4.6Z" fill="#111"/></svg>
<div class="t b" style="left:700.5px;top:481.5px;color:#0000f0;font-size:12.3px;letter-spacing:0">|z0|</div>
<div class="t f13" style="left:909.5px;top:481.5px;color:#222"><</div>
<div class="t f13" style="left:929px;top:481.5px;color:#333;letter-spacing:0.3px">20.0 cm</div>
<div class="abs" style="left:679px;top:503px;width:225px;height:22.7px;background:#c9c9c9"></div>
<div class="abs" style="left:679px;top:525.7px;width:225px;height:2.3px;background:#e6e6e6"></div>
<div class="abs" style="left:926.5px;top:502.5px;width:236px;height:23px;background:#fff;border:1px solid #7a8a99;border-top:1.5px solid #6c7c8c"></div>
<div class="abs" style="left:683px;top:508px;width:12.5px;height:12.5px;background:linear-gradient(135deg,#fff,#c4d6ee);border:1px solid #6a7a8a"></div>
<div class="t b" style="left:700.5px;top:506.5px;color:#0000f0;font-size:12.3px;letter-spacing:0.45px">|d0 Loose|</div>
<div class="t f13" style="left:909.5px;top:506.5px;color:#222"><</div>
<div class="t f13" style="left:929px;top:506.5px;color:#333;letter-spacing:0.3px">2.0 cm</div>
<div class="abs" style="left:679px;top:528px;width:225px;height:22.7px;background:#c9c9c9"></div>
<div class="abs" style="left:679px;top:550.7px;width:225px;height:2.3px;background:#e6e6e6"></div>
<div class="abs" style="left:926.5px;top:527.5px;width:236px;height:23px;background:#fff;border:1px solid #7a8a99;border-top:1.5px solid #6c7c8c"></div>
<div class="abs" style="left:683px;top:533px;width:12.5px;height:12.5px;background:linear-gradient(135deg,#fff,#c4d6ee);border:1px solid #6a7a8a"></div>
<div class="t b" style="left:700.5px;top:531.5px;color:#0000f0;font-size:12.3px;letter-spacing:0.75px">|z0-zVtx|</div>
<div class="t f13" style="left:909.5px;top:531.5px;color:#222"><</div>
<div class="t f13" style="left:929px;top:531.5px;color:#333;letter-spacing:0.3px">2.5 mm</div>
<div class="abs" style="left:679px;top:553px;width:225px;height:22.7px;background:#c9c9c9"></div>
<div class="abs" style="left:679px;top:575.7px;width:225px;height:2.3px;background:#e6e6e6"></div>
<div class="abs" style="left:926.5px;top:552.5px;width:236px;height:23px;background:#fff;border:1px solid #7a8a99;border-top:1.5px solid #6c7c8c"></div>
<div class="abs" style="left:683px;top:558px;width:12.5px;height:12.5px;background:linear-gradient(135deg,#fff,#c4d6ee);border:1px solid #6a7a8a"></div>
<div class="t b" style="left:700.5px;top:556.5px;color:#0000f0;font-size:12.3px;letter-spacing:0">Layer</div>
<div class="t f13" style="left:909.5px;top:556.5px;color:#222">></div>
<div class="t f13" style="left:929px;top:556.5px;color:#333;letter-spacing:0.3px">0</div>
<div class="abs" style="left:679px;top:576px;width:225px;height:2.8px;background:#e6e6e6"></div>
<div class="abs" style="left:679px;top:578.8px;width:225px;height:3px;background:#c9c9c9"></div>
<div class="abs" style="left:926.5px;top:577.5px;width:236px;height:5px;background:#fff;border:1px solid #7a8a99;border-bottom:0"></div>
<div class="abs" style="left:679px;top:582px;width:500px;height:1.6px;background:#fff"></div>
<div class="abs" style="left:1163px;top:426.5px;width:16px;height:155px;background:#eee;border:1px solid #7a8a99"></div>
<svg class="abs" style="left:1163px;top:426.5px" width="16" height="155"><path d="M4 9.5L8 4.5L12 9.5Z M4 145L8 150L12 145Z" fill="#222"/><path d="M0 15.5h16M0 139.5h16" stroke="#7a8a99"/><defs><linearGradient id="tg" x1="0" y1="0" x2="1" y2="0"><stop offset="0" stop-color="#bcd0ec"/><stop offset=".45" stop-color="#f2f6fc"/><stop offset="1" stop-color="#c4d6ee"/></linearGradient></defs><rect x="0.5" y="16" width="15" height="25" fill="url(#tg)" stroke="#6d8cc4"/><path d="M4 25.5h8M4 28.5h8M4 31.5h8" stroke="#5a7fc4"/></svg>
<div class="abs" style="left:1189px;top:350.5px;width:50px;height:119px;background:linear-gradient(90deg,rgba(160,190,230,.35),rgba(255,255,255,0) 30%,rgba(255,255,255,0) 75%,rgba(160,190,230,.25)),linear-gradient(#d3e0f1 0,#e0eaf5 14%,#f5f8fc 36%,#e6eef8 55%,#c4d7ee 85%,#b9d0ea 100%);border-left:1px solid #98a4b6"></div>
<div class="abs" style="left:1189px;top:469px;width:50px;height:1.6px;background:#7f93b0"></div>
<div class="abs" style="left:1189px;top:470.6px;width:50px;height:121px;background:#b8cfe9;border-left:1px solid #98a4b6;border-top:1px solid #dfe9f5"></div>
<svg class="abs" style="left:1205px;top:400px" width="20" height="20"><circle cx="7.5" cy="9" r="4.6" fill="#bfe0f4" stroke="#7aa0c8" stroke-width="1.2"/><path d="M11 12.5L17 17.5" stroke="#8a8a9a" stroke-width="1.8"/><path d="M10.5 4.5A4 4 0 1 1 15.5 10" fill="none" stroke="#7030c0" stroke-width="1.6"/><path d="M3 12l4 6l1-3l3 0z" fill="#fff" stroke="#333" stroke-width=".6"/></svg>
<svg class="abs" style="left:1205px;top:523px" width="14" height="17"><path d="M4.5 8V2.2q0-1.2 1.1-1.2t1.1 1.2V6.5q2.5-.6 4.6.9q1.3 1 1 3.3l-.8 3.8H5.8L2 10.3q-.7-1 .2-1.6q.9-.5 2.3.9z" fill="#fff" stroke="#111" stroke-width="1"/><path d="M7 9.5v3M9 9.5v3M11 9.5v3" stroke="#111" stroke-width=".8"/></svg>
</body></html>
